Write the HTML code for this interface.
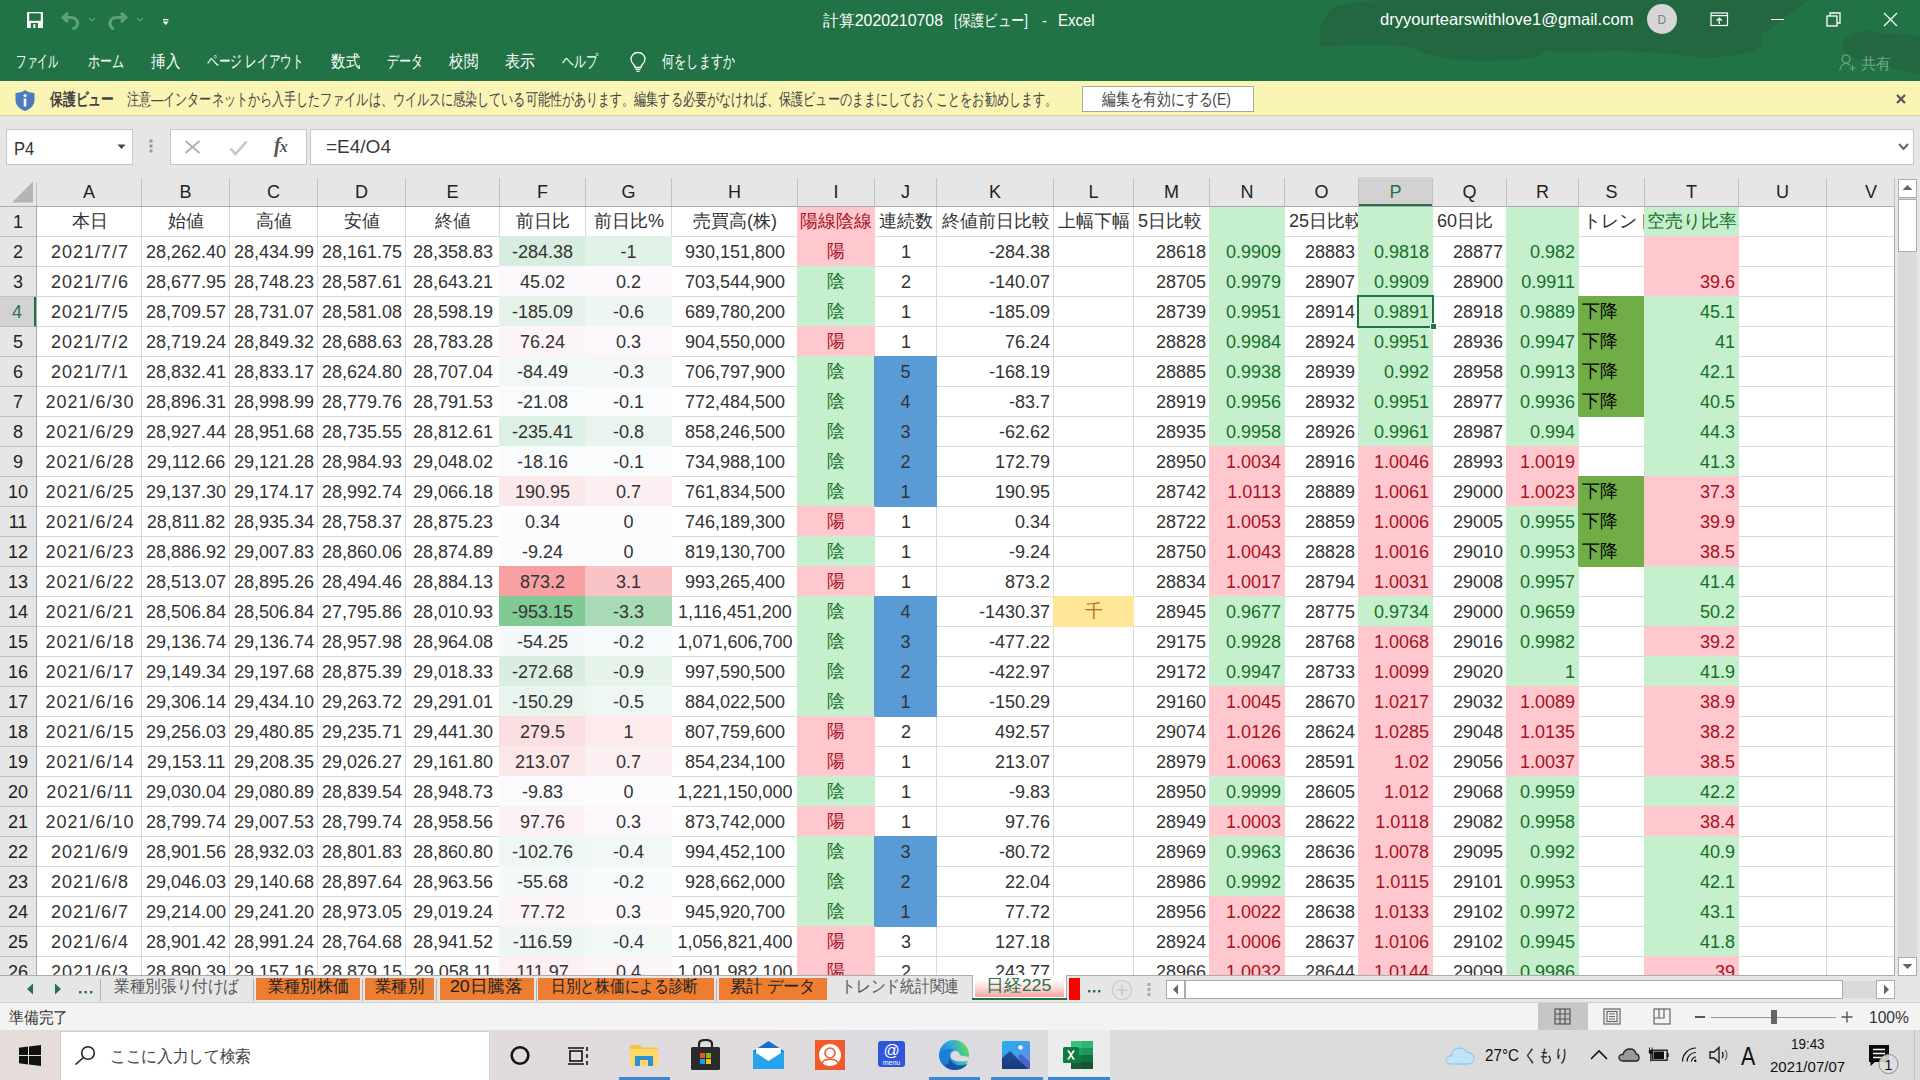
<!DOCTYPE html><html><head><meta charset="utf-8"><title>Excel</title><style>
*{box-sizing:border-box;margin:0;padding:0}
html,body{width:1920px;height:1080px;overflow:hidden;background:#fff}
body{position:relative;font-family:"Liberation Sans",sans-serif;color:#333}
.abs{position:absolute}
#title{position:absolute;left:0;top:0;width:1920px;height:81px;background:#217346;overflow:hidden;color:#fff}
#msg{position:absolute;left:0;top:81px;width:1920px;height:35px;background:#fbf5b5;border-bottom:1px solid #dfd68c}
#fbar{position:absolute;left:0;top:116px;width:1920px;height:61px;background:#e6e6e6}
#colhdr{position:absolute;left:0;top:177px;width:1896px;height:30px;background:#e6e6e6;border-bottom:1px solid #ababab}
.ch{position:absolute;top:0;height:29px;font-size:18px;line-height:31px;text-align:center;color:#222}
.ch.sel{background:#d2d2d2;color:#217346;border-bottom:2px solid #217346;line-height:31px}
.chl{position:absolute;top:1px;width:1px;height:28px;background:#c0c0c0}
#rowhdr{position:absolute;left:0;top:207px;width:37px;height:768px;background:#e6e6e6;border-right:1px solid #ababab;overflow:hidden}
.rh{position:absolute;left:0;width:36px;height:30px;border-bottom:1px solid #c0c0c0;font-size:18px;line-height:31px;text-align:center;color:#222}
.rh.sel{background:#d2d2d2;color:#217346;border-right:2px solid #217346}
#grid{position:absolute;left:0;top:0;width:1920px;height:1080px}
.vl{position:absolute;top:207px;width:1px;height:768px;background:#d9d9d9}
.hl{position:absolute;left:37px;width:1857px;height:1px;background:#d9d9d9}
.c{position:absolute;height:30px;font-size:18px;line-height:31px;white-space:nowrap;overflow:visible}
.c.r{text-align:right;padding-right:4px}
.c.m{text-align:center}
.c.l{text-align:left;padding-left:4px}
#sel{position:absolute;left:1357px;top:295px;width:77px;height:33px;border:2px solid #217346}
#selh{position:absolute;left:1430px;top:323px;width:7px;height:7px;background:#217346;border:1px solid #fff}
#gridwrap{position:absolute;left:37px;top:207px;width:1858px;height:768px;overflow:hidden}

.t{position:absolute;white-space:nowrap;line-height:1;transform-origin:0 50%}
#tabs{position:absolute;left:0;top:975px;width:1920px;height:28px;background:#e6e6e6;border-bottom:1px solid #d0d0d0}
#status{position:absolute;left:0;top:1003px;width:1920px;height:27px;background:#f3f3f3}
#taskbar{position:absolute;left:0;top:1030px;width:1920px;height:50px;background:linear-gradient(90deg,#e6dcd9 0%,#e2dbdc 25%,#dedbe0 45%,#dcdcdd 62%,#dbdbdb 100%)}
</style></head><body>
<div id="title">
<svg class="abs" style="left:0;top:0" width="1920" height="81">
<g fill="#22673f">
<path d="M1320 47 C1318 30 1322 8 1345 4 C1360 1 1380 0 1400 0 L1808 0 L1760 36 C1766 44 1762 50 1740 54 C1720 58 1700 58 1680 55 C1640 50 1600 50 1568 53 L1545 50 C1540 58 1530 60 1480 61 C1450 61 1430 56 1418 50 C1410 47 1400 45 1380 45 C1360 45 1340 45 1320 47 Z"/>
<ellipse cx="1870" cy="46" rx="28" ry="15"/>
<path d="M1850 52 C1860 36 1880 30 1920 36 L1920 74 C1900 70 1870 64 1850 52 Z"/>
</g></svg>
<svg class="abs" style="left:27px;top:12px" width="16" height="16" viewBox="0 0 16 16">
<rect x="0" y="0" width="16" height="16" rx="1" fill="#fff"/>
<rect x="2.2" y="1.3" width="11.6" height="7.5" fill="#217346"/>
<rect x="3.8" y="10.9" width="7.1" height="5.1" fill="#217346"/><rect x="6.3" y="12.2" width="2.1" height="3.8" fill="#fff"/>
</svg>
<svg class="abs" style="left:60px;top:11px" width="90" height="20" viewBox="0 0 90 20">
<g fill="none" stroke="#5d9f78" stroke-width="3.2">
<path d="M4 6.5 H11 C15.5 6.5 17.5 9.5 17.5 12.5 C17.5 15.5 15.5 17.5 12.5 17.5"/><path d="M8 2 L3.2 6.5 L8 11"/>
<path d="M63 6.5 H57 C52 6.5 50 9.5 50 12.5 C50 15.5 52 17.5 54 17.5"/><path d="M61 2 L65.8 6.5 L61 11"/>
</g>
<g fill="none" stroke="#5d9f78" stroke-width="1.1"><path d="M29 7 L32 10 L35 7"/><path d="M77 7 L80 10 L83 7"/></g>
</svg>
<svg class="abs" style="left:162px;top:18px" width="8" height="8" viewBox="0 0 8 8">
<rect x="1" y="1" width="5.4" height="1.3" fill="#fff"/><path d="M0.6 3.6 H6.8 L3.7 7 Z" fill="#fff"/></svg>
<div class="t" data-w="120" style="transform:scaleX(0.9917);left:823.0px;top:12.5px;font-size:16px;color:#fff;font-weight:normal;">計算2020210708</div>
<div class="t" data-w="74" style="transform:scaleX(0.8315);left:954.0px;top:12.5px;font-size:16px;color:#fff;font-weight:normal;">[保護ビュー]</div>
<div class="t" data-w="4.5" style="transform:scaleX(0.9000);left:1041.5px;top:12.5px;font-size:16px;color:#fff;font-weight:normal;">-</div>
<div class="t" data-w="36.5" style="transform:scaleX(0.9359);left:1057.5px;top:12.5px;font-size:16px;color:#fff;font-weight:normal;">Excel</div>
<div class="t" data-w="253" style="transform:scaleX(1.0040);left:1380.0px;top:11.0px;font-size:16.5px;color:#fff;font-weight:normal;">dryyourtearswithlove1@gmail.com</div>
<div class="abs" style="left:1647px;top:4px;width:30px;height:30px;border-radius:50%;background:#d6d6d6"></div>
<div class="t" style="left:1657.5px;top:14.3px;font-size:12px;color:#808080;font-weight:normal;">D</div>
<svg class="abs" style="left:1710px;top:12px" width="19" height="15" viewBox="0 0 19 15">
<rect x="1" y="1" width="16.5" height="12.5" fill="none" stroke="#fff" stroke-width="1.2"/>
<path d="M1 3.6 H17.5" stroke="#fff" stroke-width="1.2"/><path d="M9.25 12 V6.5 M6.6 8.8 L9.25 6.1 L11.9 8.8" fill="none" stroke="#fff" stroke-width="1.3"/></svg>
<div class="abs" style="left:1771px;top:19px;width:13px;height:1px;background:#fff"></div>
<svg class="abs" style="left:1826px;top:12px" width="16" height="15" viewBox="0 0 16 15">
<rect x="1" y="4" width="10" height="10" fill="none" stroke="#fff" stroke-width="1.3"/>
<path d="M4 4 V1 H14 V11 H11" fill="none" stroke="#fff" stroke-width="1.3"/></svg>
<svg class="abs" style="left:1883px;top:12px" width="15" height="15" viewBox="0 0 15 15">
<path d="M1 1 L14 14 M14 1 L1 14" stroke="#fff" stroke-width="1.2"/></svg>
<div class="t" data-w="42" style="transform:scaleX(0.6176);left:16.0px;top:52.6px;font-size:17px;color:#fff;font-weight:normal;">ファイル</div>
<div class="t" data-w="36" style="transform:scaleX(0.7059);left:88.0px;top:52.6px;font-size:17px;color:#fff;font-weight:normal;">ホーム</div>
<div class="t" data-w="29" style="transform:scaleX(0.8529);left:151.0px;top:52.6px;font-size:17px;color:#fff;font-weight:normal;">挿入</div>
<div class="t" data-w="97" style="transform:scaleX(0.6879);left:207.0px;top:52.6px;font-size:17px;color:#fff;font-weight:normal;">ページ レイアウト</div>
<div class="t" data-w="29" style="transform:scaleX(0.8529);left:331.0px;top:52.6px;font-size:17px;color:#fff;font-weight:normal;">数式</div>
<div class="t" data-w="36" style="transform:scaleX(0.7059);left:387.0px;top:52.6px;font-size:17px;color:#fff;font-weight:normal;">データ</div>
<div class="t" data-w="29" style="transform:scaleX(0.8529);left:449.0px;top:52.6px;font-size:17px;color:#fff;font-weight:normal;">校閲</div>
<div class="t" data-w="30" style="transform:scaleX(0.8824);left:505.0px;top:52.6px;font-size:17px;color:#fff;font-weight:normal;">表示</div>
<div class="t" data-w="36" style="transform:scaleX(0.7059);left:562.0px;top:52.6px;font-size:17px;color:#fff;font-weight:normal;">ヘルプ</div>
<svg class="abs" style="left:629px;top:51px" width="18" height="22" viewBox="0 0 18 22">
<path d="M9 1.5 C4.5 1.5 2 4.8 2 8.3 C2 11 3.6 12.6 5 14 C5.8 14.8 6 15.5 6 16.5 H12 C12 15.5 12.2 14.8 13 14 C14.4 12.6 16 11 16 8.3 C16 4.8 13.5 1.5 9 1.5 Z" fill="none" stroke="#fff" stroke-width="1.3"/>
<path d="M6.5 18.3 H11.5 M7.5 20.3 H10.5" stroke="#fff" stroke-width="1.3"/></svg>
<div class="t" data-w="73" style="transform:scaleX(0.7157);left:662.0px;top:52.6px;font-size:17px;color:#fff;font-weight:normal;">何をしますか</div>
<svg class="abs" style="left:1839px;top:54px" width="18" height="18" viewBox="0 0 18 18">
<g fill="none" stroke="#72a483" stroke-width="1.2"><circle cx="7" cy="5" r="4"/><path d="M0.8 16.5 C1.5 11.5 4 9.5 7 9.5 C8.5 9.5 9.8 10 10.8 11"/>
<path d="M13.5 11 V17 M10.5 14 H16.5"/></g></svg>
<div class="t" data-w="30" style="transform:scaleX(0.9375);left:1861.0px;top:55.5px;font-size:16px;color:#72a483;font-weight:normal;">共有</div>
</div>
<div id="msg">
<svg class="abs" style="left:14px;top:8px" width="22" height="23" viewBox="0 0 22 23">
<path d="M11 1 C8 3.2 5 4 1.5 4 V11 C1.5 16.5 5.5 20 11 22 C16.5 20 20.5 16.5 20.5 11 V4 C17 4 14 3.2 11 1 Z" fill="#4a7cc0"/>
<rect x="9.7" y="9.5" width="2.6" height="8" fill="#fff"/><circle cx="11" cy="6.6" r="1.5" fill="#fff"/></svg>
<div class="t" data-w="64" style="transform:scaleX(0.7529);left:50.0px;top:9.6px;font-size:17px;color:#444;font-weight:bold;">保護ビュー</div>
<div class="t" data-w="930" style="transform:scaleX(0.7105);left:127.0px;top:9.6px;font-size:17px;color:#444;font-weight:normal;">注意―インターネットから入手したファイルは、ウイルスに感染している可能性があります。編集する必要がなければ、保護ビューのままにしておくことをお勧めします。</div>
<div class="abs" style="left:1082px;top:5px;width:172px;height:26px;background:#fff;border:1px solid #a6a6a6"></div>
<div class="t" data-w="129" style="transform:scaleX(0.8113);left:1102.0px;top:10.1px;font-size:17px;color:#444;font-weight:normal;">編集を有効にする(E)</div>
<svg class="abs" style="left:1896px;top:13px" width="10" height="10" viewBox="0 0 10 10">
<path d="M1 1 L9 9 M9 1 L1 9" stroke="#555" stroke-width="2.2"/></svg>
</div>
<div id="fbar">
<div class="abs" style="left:6px;top:13px;width:127px;height:36px;background:#fff;border:1px solid #c6c6c6"></div>
<div class="t" data-w="20" style="transform:scaleX(0.8696);left:14.0px;top:23.4px;font-size:19px;color:#333;font-weight:normal;">P4</div>
<svg class="abs" style="left:117px;top:28px" width="9" height="6"><path d="M0.5 0.5 H8.5 L4.5 5 Z" fill="#444"/></svg>
<svg class="abs" style="left:149px;top:23px" width="5" height="15"><rect x="0.5" y="0.5" width="3" height="3" fill="#999"/><rect x="0.5" y="5.5" width="3" height="3" fill="#999"/><rect x="0.5" y="10.5" width="3" height="3" fill="#999"/></svg>
<div class="abs" style="left:170px;top:13px;width:137px;height:36px;background:#fff;border:1px solid #c6c6c6"></div>
<svg class="abs" style="left:184px;top:24px" width="17" height="14"><path d="M1.5 1 L15.5 13 M15.5 1 L1.5 13" stroke="#b4b4b4" stroke-width="2.2"/></svg>
<svg class="abs" style="left:229px;top:24px" width="19" height="16"><path d="M1.5 8.5 L6.5 14 L17.5 1.5" fill="none" stroke="#c8c8c8" stroke-width="2.6"/></svg>
<div class="t" style="left:274px;top:19px;font-family:'Liberation Serif',serif;font-style:italic;font-weight:bold;font-size:20px;color:#555;letter-spacing:-1px">f<span style="font-size:16px">x</span></div>
<div class="abs" style="left:310px;top:13px;width:1604px;height:36px;background:#fff;border:1px solid #c6c6c6"></div>
<div class="t" data-w="65" style="transform:scaleX(1.0000);left:326.0px;top:21.4px;font-size:19px;color:#3a3a3a;font-weight:normal;transform-origin:0 100%;">=E4/O4</div>
<svg class="abs" style="left:1898px;top:27px" width="11" height="8"><path d="M1 1 L5.5 6 L10 1" fill="none" stroke="#666" stroke-width="2"/></svg>
</div>
<div style="position:absolute;left:0;top:0;width:1895px;height:975px;overflow:hidden">
<div id="grid">
<div class="vl" style="left:141px"></div>
<div class="vl" style="left:229px"></div>
<div class="vl" style="left:317px"></div>
<div class="vl" style="left:405px"></div>
<div class="vl" style="left:499px"></div>
<div class="vl" style="left:585px"></div>
<div class="vl" style="left:671px"></div>
<div class="vl" style="left:797px"></div>
<div class="vl" style="left:874px"></div>
<div class="vl" style="left:936px"></div>
<div class="vl" style="left:1053px"></div>
<div class="vl" style="left:1133px"></div>
<div class="vl" style="left:1209px"></div>
<div class="vl" style="left:1284px"></div>
<div class="vl" style="left:1358px"></div>
<div class="vl" style="left:1432px"></div>
<div class="vl" style="left:1506px"></div>
<div class="vl" style="left:1578px"></div>
<div class="vl" style="left:1644px"></div>
<div class="vl" style="left:1738px"></div>
<div class="vl" style="left:1826px"></div>
<div class="hl" style="top:236px"></div>
<div class="hl" style="top:266px"></div>
<div class="hl" style="top:296px"></div>
<div class="hl" style="top:326px"></div>
<div class="hl" style="top:356px"></div>
<div class="hl" style="top:386px"></div>
<div class="hl" style="top:416px"></div>
<div class="hl" style="top:446px"></div>
<div class="hl" style="top:476px"></div>
<div class="hl" style="top:506px"></div>
<div class="hl" style="top:536px"></div>
<div class="hl" style="top:566px"></div>
<div class="hl" style="top:596px"></div>
<div class="hl" style="top:626px"></div>
<div class="hl" style="top:656px"></div>
<div class="hl" style="top:686px"></div>
<div class="hl" style="top:716px"></div>
<div class="hl" style="top:746px"></div>
<div class="hl" style="top:776px"></div>
<div class="hl" style="top:806px"></div>
<div class="hl" style="top:836px"></div>
<div class="hl" style="top:866px"></div>
<div class="hl" style="top:896px"></div>
<div class="hl" style="top:926px"></div>
<div class="hl" style="top:956px"></div>
<div class="c m" style="left:37px;top:207px;width:105px;height:30px;line-height:29px;">本日</div>
<div class="c m" style="left:142px;top:207px;width:88px;height:30px;line-height:29px;">始値</div>
<div class="c m" style="left:230px;top:207px;width:88px;height:30px;line-height:29px;">高値</div>
<div class="c m" style="left:318px;top:207px;width:88px;height:30px;line-height:29px;">安値</div>
<div class="c m" style="left:406px;top:207px;width:94px;height:30px;line-height:29px;">終値</div>
<div class="c m" style="left:500px;top:207px;width:86px;height:30px;line-height:29px;">前日比</div>
<div class="c m" style="left:586px;top:207px;width:86px;height:30px;line-height:29px;">前日比%</div>
<div class="c m" style="left:672px;top:207px;width:126px;height:30px;line-height:29px;">売買高(株)</div>
<div class="c m" style="left:797px;top:207px;width:78px;height:30px;line-height:29px;background:#ffc7ce;color:#a8101c;">陽線陰線</div>
<div class="c m" style="left:875px;top:207px;width:62px;height:30px;line-height:29px;">連続数</div>
<div class="c m" style="left:937px;top:207px;width:117px;height:30px;line-height:29px;">終値前日比較</div>
<div class="c m" style="left:1054px;top:207px;width:80px;height:30px;line-height:29px;">上幅下幅</div>
<div class="c l" style="left:1134px;top:207px;width:76px;height:30px;line-height:29px;">5日比較</div>
<div class="c l" style="left:1209px;top:207px;width:76px;height:30px;line-height:31px;background:#c6efce;"></div>
<div class="c l" style="left:1285px;top:207px;width:74px;height:30px;line-height:29px;">25日比較</div>
<div class="c l" style="left:1358px;top:207px;width:75px;height:30px;line-height:31px;background:#c6efce;"></div>
<div class="c l" style="left:1433px;top:207px;width:74px;height:30px;line-height:29px;">60日比</div>
<div class="c l" style="left:1506px;top:207px;width:73px;height:30px;line-height:31px;background:#c6efce;"></div>
<div class="c l" style="left:1579px;top:207px;width:66px;height:30px;line-height:29px;overflow:hidden;">トレンド</div>
<div class="c l" style="left:1644px;top:207px;width:95px;height:30px;line-height:29px;background:#c6efce;color:#137024;padding-left:3px;">空売り比率</div>
<div class="c m" style="left:37px;top:237px;width:105px;height:30px;line-height:31px;letter-spacing:1px;text-indent:1px;">2021/7/7</div>
<div class="c m" style="left:142px;top:237px;width:88px;height:30px;line-height:31px;">28,262.40</div>
<div class="c m" style="left:230px;top:237px;width:88px;height:30px;line-height:31px;">28,434.99</div>
<div class="c m" style="left:318px;top:237px;width:88px;height:30px;line-height:31px;">28,161.75</div>
<div class="c m" style="left:406px;top:237px;width:94px;height:30px;line-height:31px;">28,358.83</div>
<div class="c m" style="left:499px;top:236px;width:87px;height:31px;line-height:32px;background:#d7eddf;">-284.38</div>
<div class="c m" style="left:585px;top:236px;width:87px;height:31px;line-height:32px;background:#e2f2e9;">-1</div>
<div class="c m" style="left:672px;top:237px;width:126px;height:30px;line-height:31px;">930,151,800</div>
<div class="c m" style="left:797px;top:236px;width:78px;height:31px;line-height:30px;background:#ffc7ce;color:#a8101c;">陽</div>
<div class="c m" style="left:875px;top:237px;width:62px;height:30px;line-height:31px;">1</div>
<div class="c r" style="left:937px;top:237px;width:117px;height:30px;line-height:31px;">-284.38</div>
<div class="c r" style="left:1134px;top:237px;width:76px;height:30px;line-height:31px;">28618</div>
<div class="c r" style="left:1209px;top:236px;width:76px;height:31px;line-height:32px;background:#c6efce;color:#137024;">0.9909</div>
<div class="c r" style="left:1358px;top:236px;width:75px;height:31px;line-height:32px;background:#c6efce;color:#137024;">0.9818</div>
<div class="c r" style="left:1506px;top:236px;width:73px;height:31px;line-height:32px;background:#c6efce;color:#137024;">0.982</div>
<div class="c r" style="left:1285px;top:237px;width:74px;height:30px;line-height:31px;">28883</div>
<div class="c r" style="left:1433px;top:237px;width:74px;height:30px;line-height:31px;">28877</div>
<div class="c r" style="left:1644px;top:236px;width:95px;height:31px;line-height:32px;background:#ffc7ce;color:#a8101c;"></div>
<div class="c m" style="left:37px;top:267px;width:105px;height:30px;line-height:31px;letter-spacing:1px;text-indent:1px;">2021/7/6</div>
<div class="c m" style="left:142px;top:267px;width:88px;height:30px;line-height:31px;">28,677.95</div>
<div class="c m" style="left:230px;top:267px;width:88px;height:30px;line-height:31px;">28,748.23</div>
<div class="c m" style="left:318px;top:267px;width:88px;height:30px;line-height:31px;">28,587.61</div>
<div class="c m" style="left:406px;top:267px;width:94px;height:30px;line-height:31px;">28,643.21</div>
<div class="c m" style="left:499px;top:266px;width:87px;height:31px;line-height:32px;background:#fcf7fa;">45.02</div>
<div class="c m" style="left:585px;top:266px;width:87px;height:31px;line-height:32px;background:#fcf8fb;">0.2</div>
<div class="c m" style="left:672px;top:267px;width:126px;height:30px;line-height:31px;">703,544,900</div>
<div class="c m" style="left:797px;top:266px;width:78px;height:31px;line-height:30px;background:#c6efce;color:#137024;">陰</div>
<div class="c m" style="left:875px;top:267px;width:62px;height:30px;line-height:31px;">2</div>
<div class="c r" style="left:937px;top:267px;width:117px;height:30px;line-height:31px;">-140.07</div>
<div class="c r" style="left:1134px;top:267px;width:76px;height:30px;line-height:31px;">28705</div>
<div class="c r" style="left:1209px;top:266px;width:76px;height:31px;line-height:32px;background:#c6efce;color:#137024;">0.9979</div>
<div class="c r" style="left:1358px;top:266px;width:75px;height:31px;line-height:32px;background:#c6efce;color:#137024;">0.9909</div>
<div class="c r" style="left:1506px;top:266px;width:73px;height:31px;line-height:32px;background:#c6efce;color:#137024;">0.9911</div>
<div class="c r" style="left:1285px;top:267px;width:74px;height:30px;line-height:31px;">28907</div>
<div class="c r" style="left:1433px;top:267px;width:74px;height:30px;line-height:31px;">28900</div>
<div class="c r" style="left:1644px;top:266px;width:95px;height:31px;line-height:32px;background:#ffc7ce;color:#a8101c;">39.6</div>
<div class="c m" style="left:37px;top:297px;width:105px;height:30px;line-height:31px;letter-spacing:1px;text-indent:1px;">2021/7/5</div>
<div class="c m" style="left:142px;top:297px;width:88px;height:30px;line-height:31px;">28,709.57</div>
<div class="c m" style="left:230px;top:297px;width:88px;height:30px;line-height:31px;">28,731.07</div>
<div class="c m" style="left:318px;top:297px;width:88px;height:30px;line-height:31px;">28,581.08</div>
<div class="c m" style="left:406px;top:297px;width:94px;height:30px;line-height:31px;">28,598.19</div>
<div class="c m" style="left:499px;top:296px;width:87px;height:31px;line-height:32px;background:#e4f2ea;">-185.09</div>
<div class="c m" style="left:585px;top:296px;width:87px;height:31px;line-height:32px;background:#edf6f2;">-0.6</div>
<div class="c m" style="left:672px;top:297px;width:126px;height:30px;line-height:31px;">689,780,200</div>
<div class="c m" style="left:797px;top:296px;width:78px;height:31px;line-height:30px;background:#c6efce;color:#137024;">陰</div>
<div class="c m" style="left:875px;top:297px;width:62px;height:30px;line-height:31px;">1</div>
<div class="c r" style="left:937px;top:297px;width:117px;height:30px;line-height:31px;">-185.09</div>
<div class="c r" style="left:1134px;top:297px;width:76px;height:30px;line-height:31px;">28739</div>
<div class="c r" style="left:1209px;top:296px;width:76px;height:31px;line-height:32px;background:#c6efce;color:#137024;">0.9951</div>
<div class="c r" style="left:1358px;top:296px;width:75px;height:31px;line-height:32px;background:#c6efce;color:#137024;">0.9891</div>
<div class="c r" style="left:1506px;top:296px;width:73px;height:31px;line-height:32px;background:#c6efce;color:#137024;">0.9889</div>
<div class="c r" style="left:1285px;top:297px;width:74px;height:30px;line-height:31px;">28914</div>
<div class="c r" style="left:1433px;top:297px;width:74px;height:30px;line-height:31px;">28918</div>
<div class="c l" style="left:1578px;top:296px;width:67px;height:31px;line-height:30px;background:#70ad47;color:#000;">下降</div>
<div class="c r" style="left:1644px;top:296px;width:95px;height:31px;line-height:32px;background:#c6efce;color:#137024;">45.1</div>
<div class="c m" style="left:37px;top:327px;width:105px;height:30px;line-height:31px;letter-spacing:1px;text-indent:1px;">2021/7/2</div>
<div class="c m" style="left:142px;top:327px;width:88px;height:30px;line-height:31px;">28,719.24</div>
<div class="c m" style="left:230px;top:327px;width:88px;height:30px;line-height:31px;">28,849.32</div>
<div class="c m" style="left:318px;top:327px;width:88px;height:30px;line-height:31px;">28,688.63</div>
<div class="c m" style="left:406px;top:327px;width:94px;height:30px;line-height:31px;">28,783.28</div>
<div class="c m" style="left:499px;top:326px;width:87px;height:31px;line-height:32px;background:#fcf4f7;">76.24</div>
<div class="c m" style="left:585px;top:326px;width:87px;height:31px;line-height:32px;background:#fcf7fa;">0.3</div>
<div class="c m" style="left:672px;top:327px;width:126px;height:30px;line-height:31px;">904,550,000</div>
<div class="c m" style="left:797px;top:326px;width:78px;height:31px;line-height:30px;background:#ffc7ce;color:#a8101c;">陽</div>
<div class="c m" style="left:875px;top:327px;width:62px;height:30px;line-height:31px;">1</div>
<div class="c r" style="left:937px;top:327px;width:117px;height:30px;line-height:31px;">76.24</div>
<div class="c r" style="left:1134px;top:327px;width:76px;height:30px;line-height:31px;">28828</div>
<div class="c r" style="left:1209px;top:326px;width:76px;height:31px;line-height:32px;background:#c6efce;color:#137024;">0.9984</div>
<div class="c r" style="left:1358px;top:326px;width:75px;height:31px;line-height:32px;background:#c6efce;color:#137024;">0.9951</div>
<div class="c r" style="left:1506px;top:326px;width:73px;height:31px;line-height:32px;background:#c6efce;color:#137024;">0.9947</div>
<div class="c r" style="left:1285px;top:327px;width:74px;height:30px;line-height:31px;">28924</div>
<div class="c r" style="left:1433px;top:327px;width:74px;height:30px;line-height:31px;">28936</div>
<div class="c l" style="left:1578px;top:326px;width:67px;height:31px;line-height:30px;background:#70ad47;color:#000;">下降</div>
<div class="c r" style="left:1644px;top:326px;width:95px;height:31px;line-height:32px;background:#c6efce;color:#137024;">41</div>
<div class="c m" style="left:37px;top:357px;width:105px;height:30px;line-height:31px;letter-spacing:1px;text-indent:1px;">2021/7/1</div>
<div class="c m" style="left:142px;top:357px;width:88px;height:30px;line-height:31px;">28,832.41</div>
<div class="c m" style="left:230px;top:357px;width:88px;height:30px;line-height:31px;">28,833.17</div>
<div class="c m" style="left:318px;top:357px;width:88px;height:30px;line-height:31px;">28,624.80</div>
<div class="c m" style="left:406px;top:357px;width:94px;height:30px;line-height:31px;">28,707.04</div>
<div class="c m" style="left:499px;top:356px;width:87px;height:31px;line-height:32px;background:#f1f8f6;">-84.49</div>
<div class="c m" style="left:585px;top:356px;width:87px;height:31px;line-height:32px;background:#f4f9f8;">-0.3</div>
<div class="c m" style="left:672px;top:357px;width:126px;height:30px;line-height:31px;">706,797,900</div>
<div class="c m" style="left:797px;top:356px;width:78px;height:31px;line-height:30px;background:#c6efce;color:#137024;">陰</div>
<div class="c m" style="left:874px;top:356px;width:63px;height:31px;line-height:32px;background:#5b9bd5;">5</div>
<div class="c r" style="left:937px;top:357px;width:117px;height:30px;line-height:31px;">-168.19</div>
<div class="c r" style="left:1134px;top:357px;width:76px;height:30px;line-height:31px;">28885</div>
<div class="c r" style="left:1209px;top:356px;width:76px;height:31px;line-height:32px;background:#c6efce;color:#137024;">0.9938</div>
<div class="c r" style="left:1358px;top:356px;width:75px;height:31px;line-height:32px;background:#c6efce;color:#137024;">0.992</div>
<div class="c r" style="left:1506px;top:356px;width:73px;height:31px;line-height:32px;background:#c6efce;color:#137024;">0.9913</div>
<div class="c r" style="left:1285px;top:357px;width:74px;height:30px;line-height:31px;">28939</div>
<div class="c r" style="left:1433px;top:357px;width:74px;height:30px;line-height:31px;">28958</div>
<div class="c l" style="left:1578px;top:356px;width:67px;height:31px;line-height:30px;background:#70ad47;color:#000;">下降</div>
<div class="c r" style="left:1644px;top:356px;width:95px;height:31px;line-height:32px;background:#c6efce;color:#137024;">42.1</div>
<div class="c m" style="left:37px;top:387px;width:105px;height:30px;line-height:31px;letter-spacing:1px;text-indent:1px;">2021/6/30</div>
<div class="c m" style="left:142px;top:387px;width:88px;height:30px;line-height:31px;">28,896.31</div>
<div class="c m" style="left:230px;top:387px;width:88px;height:30px;line-height:31px;">28,998.99</div>
<div class="c m" style="left:318px;top:387px;width:88px;height:30px;line-height:31px;">28,779.76</div>
<div class="c m" style="left:406px;top:387px;width:94px;height:30px;line-height:31px;">28,791.53</div>
<div class="c m" style="left:499px;top:386px;width:87px;height:31px;line-height:32px;background:#f9fbfd;">-21.08</div>
<div class="c m" style="left:585px;top:386px;width:87px;height:31px;line-height:32px;background:#f9fbfd;">-0.1</div>
<div class="c m" style="left:672px;top:387px;width:126px;height:30px;line-height:31px;">772,484,500</div>
<div class="c m" style="left:797px;top:386px;width:78px;height:31px;line-height:30px;background:#c6efce;color:#137024;">陰</div>
<div class="c m" style="left:874px;top:386px;width:63px;height:31px;line-height:32px;background:#5b9bd5;">4</div>
<div class="c r" style="left:937px;top:387px;width:117px;height:30px;line-height:31px;">-83.7</div>
<div class="c r" style="left:1134px;top:387px;width:76px;height:30px;line-height:31px;">28919</div>
<div class="c r" style="left:1209px;top:386px;width:76px;height:31px;line-height:32px;background:#c6efce;color:#137024;">0.9956</div>
<div class="c r" style="left:1358px;top:386px;width:75px;height:31px;line-height:32px;background:#c6efce;color:#137024;">0.9951</div>
<div class="c r" style="left:1506px;top:386px;width:73px;height:31px;line-height:32px;background:#c6efce;color:#137024;">0.9936</div>
<div class="c r" style="left:1285px;top:387px;width:74px;height:30px;line-height:31px;">28932</div>
<div class="c r" style="left:1433px;top:387px;width:74px;height:30px;line-height:31px;">28977</div>
<div class="c l" style="left:1578px;top:386px;width:67px;height:31px;line-height:30px;background:#70ad47;color:#000;">下降</div>
<div class="c r" style="left:1644px;top:386px;width:95px;height:31px;line-height:32px;background:#c6efce;color:#137024;">40.5</div>
<div class="c m" style="left:37px;top:417px;width:105px;height:30px;line-height:31px;letter-spacing:1px;text-indent:1px;">2021/6/29</div>
<div class="c m" style="left:142px;top:417px;width:88px;height:30px;line-height:31px;">28,927.44</div>
<div class="c m" style="left:230px;top:417px;width:88px;height:30px;line-height:31px;">28,951.68</div>
<div class="c m" style="left:318px;top:417px;width:88px;height:30px;line-height:31px;">28,735.55</div>
<div class="c m" style="left:406px;top:417px;width:94px;height:30px;line-height:31px;">28,812.61</div>
<div class="c m" style="left:499px;top:416px;width:87px;height:31px;line-height:32px;background:#ddf0e5;">-235.41</div>
<div class="c m" style="left:585px;top:416px;width:87px;height:31px;line-height:32px;background:#e8f4ed;">-0.8</div>
<div class="c m" style="left:672px;top:417px;width:126px;height:30px;line-height:31px;">858,246,500</div>
<div class="c m" style="left:797px;top:416px;width:78px;height:31px;line-height:30px;background:#c6efce;color:#137024;">陰</div>
<div class="c m" style="left:874px;top:416px;width:63px;height:31px;line-height:32px;background:#5b9bd5;">3</div>
<div class="c r" style="left:937px;top:417px;width:117px;height:30px;line-height:31px;">-62.62</div>
<div class="c r" style="left:1134px;top:417px;width:76px;height:30px;line-height:31px;">28935</div>
<div class="c r" style="left:1209px;top:416px;width:76px;height:31px;line-height:32px;background:#c6efce;color:#137024;">0.9958</div>
<div class="c r" style="left:1358px;top:416px;width:75px;height:31px;line-height:32px;background:#c6efce;color:#137024;">0.9961</div>
<div class="c r" style="left:1506px;top:416px;width:73px;height:31px;line-height:32px;background:#c6efce;color:#137024;">0.994</div>
<div class="c r" style="left:1285px;top:417px;width:74px;height:30px;line-height:31px;">28926</div>
<div class="c r" style="left:1433px;top:417px;width:74px;height:30px;line-height:31px;">28987</div>
<div class="c r" style="left:1644px;top:416px;width:95px;height:31px;line-height:32px;background:#c6efce;color:#137024;">44.3</div>
<div class="c m" style="left:37px;top:447px;width:105px;height:30px;line-height:31px;letter-spacing:1px;text-indent:1px;">2021/6/28</div>
<div class="c m" style="left:142px;top:447px;width:88px;height:30px;line-height:31px;">29,112.66</div>
<div class="c m" style="left:230px;top:447px;width:88px;height:30px;line-height:31px;">29,121.28</div>
<div class="c m" style="left:318px;top:447px;width:88px;height:30px;line-height:31px;">28,984.93</div>
<div class="c m" style="left:406px;top:447px;width:94px;height:30px;line-height:31px;">29,048.02</div>
<div class="c m" style="left:499px;top:446px;width:87px;height:31px;line-height:32px;background:#fafbfd;">-18.16</div>
<div class="c m" style="left:585px;top:446px;width:87px;height:31px;line-height:32px;background:#f9fbfd;">-0.1</div>
<div class="c m" style="left:672px;top:447px;width:126px;height:30px;line-height:31px;">734,988,100</div>
<div class="c m" style="left:797px;top:446px;width:78px;height:31px;line-height:30px;background:#c6efce;color:#137024;">陰</div>
<div class="c m" style="left:874px;top:446px;width:63px;height:31px;line-height:32px;background:#5b9bd5;">2</div>
<div class="c r" style="left:937px;top:447px;width:117px;height:30px;line-height:31px;">172.79</div>
<div class="c r" style="left:1134px;top:447px;width:76px;height:30px;line-height:31px;">28950</div>
<div class="c r" style="left:1209px;top:446px;width:76px;height:31px;line-height:32px;background:#ffc7ce;color:#a8101c;">1.0034</div>
<div class="c r" style="left:1358px;top:446px;width:75px;height:31px;line-height:32px;background:#ffc7ce;color:#a8101c;">1.0046</div>
<div class="c r" style="left:1506px;top:446px;width:73px;height:31px;line-height:32px;background:#ffc7ce;color:#a8101c;">1.0019</div>
<div class="c r" style="left:1285px;top:447px;width:74px;height:30px;line-height:31px;">28916</div>
<div class="c r" style="left:1433px;top:447px;width:74px;height:30px;line-height:31px;">28993</div>
<div class="c r" style="left:1644px;top:446px;width:95px;height:31px;line-height:32px;background:#c6efce;color:#137024;">41.3</div>
<div class="c m" style="left:37px;top:477px;width:105px;height:30px;line-height:31px;letter-spacing:1px;text-indent:1px;">2021/6/25</div>
<div class="c m" style="left:142px;top:477px;width:88px;height:30px;line-height:31px;">29,137.30</div>
<div class="c m" style="left:230px;top:477px;width:88px;height:30px;line-height:31px;">29,174.17</div>
<div class="c m" style="left:318px;top:477px;width:88px;height:30px;line-height:31px;">28,992.74</div>
<div class="c m" style="left:406px;top:477px;width:94px;height:30px;line-height:31px;">29,066.18</div>
<div class="c m" style="left:499px;top:476px;width:87px;height:31px;line-height:32px;background:#fbe8eb;">190.95</div>
<div class="c m" style="left:585px;top:476px;width:87px;height:31px;line-height:32px;background:#fceff2;">0.7</div>
<div class="c m" style="left:672px;top:477px;width:126px;height:30px;line-height:31px;">761,834,500</div>
<div class="c m" style="left:797px;top:476px;width:78px;height:31px;line-height:30px;background:#c6efce;color:#137024;">陰</div>
<div class="c m" style="left:874px;top:476px;width:63px;height:31px;line-height:32px;background:#5b9bd5;">1</div>
<div class="c r" style="left:937px;top:477px;width:117px;height:30px;line-height:31px;">190.95</div>
<div class="c r" style="left:1134px;top:477px;width:76px;height:30px;line-height:31px;">28742</div>
<div class="c r" style="left:1209px;top:476px;width:76px;height:31px;line-height:32px;background:#ffc7ce;color:#a8101c;">1.0113</div>
<div class="c r" style="left:1358px;top:476px;width:75px;height:31px;line-height:32px;background:#ffc7ce;color:#a8101c;">1.0061</div>
<div class="c r" style="left:1506px;top:476px;width:73px;height:31px;line-height:32px;background:#ffc7ce;color:#a8101c;">1.0023</div>
<div class="c r" style="left:1285px;top:477px;width:74px;height:30px;line-height:31px;">28889</div>
<div class="c r" style="left:1433px;top:477px;width:74px;height:30px;line-height:31px;">29000</div>
<div class="c l" style="left:1578px;top:476px;width:67px;height:31px;line-height:30px;background:#70ad47;color:#000;">下降</div>
<div class="c r" style="left:1644px;top:476px;width:95px;height:31px;line-height:32px;background:#ffc7ce;color:#a8101c;">37.3</div>
<div class="c m" style="left:37px;top:507px;width:105px;height:30px;line-height:31px;letter-spacing:1px;text-indent:1px;">2021/6/24</div>
<div class="c m" style="left:142px;top:507px;width:88px;height:30px;line-height:31px;">28,811.82</div>
<div class="c m" style="left:230px;top:507px;width:88px;height:30px;line-height:31px;">28,935.34</div>
<div class="c m" style="left:318px;top:507px;width:88px;height:30px;line-height:31px;">28,758.37</div>
<div class="c m" style="left:406px;top:507px;width:94px;height:30px;line-height:31px;">28,875.23</div>
<div class="c m" style="left:499px;top:506px;width:87px;height:31px;line-height:32px;background:#fcfcff;">0.34</div>
<div class="c m" style="left:585px;top:506px;width:87px;height:31px;line-height:32px;background:#fcfcff;">0</div>
<div class="c m" style="left:672px;top:507px;width:126px;height:30px;line-height:31px;">746,189,300</div>
<div class="c m" style="left:797px;top:506px;width:78px;height:31px;line-height:30px;background:#ffc7ce;color:#a8101c;">陽</div>
<div class="c m" style="left:875px;top:507px;width:62px;height:30px;line-height:31px;">1</div>
<div class="c r" style="left:937px;top:507px;width:117px;height:30px;line-height:31px;">0.34</div>
<div class="c r" style="left:1134px;top:507px;width:76px;height:30px;line-height:31px;">28722</div>
<div class="c r" style="left:1209px;top:506px;width:76px;height:31px;line-height:32px;background:#ffc7ce;color:#a8101c;">1.0053</div>
<div class="c r" style="left:1358px;top:506px;width:75px;height:31px;line-height:32px;background:#ffc7ce;color:#a8101c;">1.0006</div>
<div class="c r" style="left:1506px;top:506px;width:73px;height:31px;line-height:32px;background:#c6efce;color:#137024;">0.9955</div>
<div class="c r" style="left:1285px;top:507px;width:74px;height:30px;line-height:31px;">28859</div>
<div class="c r" style="left:1433px;top:507px;width:74px;height:30px;line-height:31px;">29005</div>
<div class="c l" style="left:1578px;top:506px;width:67px;height:31px;line-height:30px;background:#70ad47;color:#000;">下降</div>
<div class="c r" style="left:1644px;top:506px;width:95px;height:31px;line-height:32px;background:#ffc7ce;color:#a8101c;">39.9</div>
<div class="c m" style="left:37px;top:537px;width:105px;height:30px;line-height:31px;letter-spacing:1px;text-indent:1px;">2021/6/23</div>
<div class="c m" style="left:142px;top:537px;width:88px;height:30px;line-height:31px;">28,886.92</div>
<div class="c m" style="left:230px;top:537px;width:88px;height:30px;line-height:31px;">29,007.83</div>
<div class="c m" style="left:318px;top:537px;width:88px;height:30px;line-height:31px;">28,860.06</div>
<div class="c m" style="left:406px;top:537px;width:94px;height:30px;line-height:31px;">28,874.89</div>
<div class="c m" style="left:499px;top:536px;width:87px;height:31px;line-height:32px;background:#fbfcfe;">-9.24</div>
<div class="c m" style="left:585px;top:536px;width:87px;height:31px;line-height:32px;background:#fcfcff;">0</div>
<div class="c m" style="left:672px;top:537px;width:126px;height:30px;line-height:31px;">819,130,700</div>
<div class="c m" style="left:797px;top:536px;width:78px;height:31px;line-height:30px;background:#c6efce;color:#137024;">陰</div>
<div class="c m" style="left:875px;top:537px;width:62px;height:30px;line-height:31px;">1</div>
<div class="c r" style="left:937px;top:537px;width:117px;height:30px;line-height:31px;">-9.24</div>
<div class="c r" style="left:1134px;top:537px;width:76px;height:30px;line-height:31px;">28750</div>
<div class="c r" style="left:1209px;top:536px;width:76px;height:31px;line-height:32px;background:#ffc7ce;color:#a8101c;">1.0043</div>
<div class="c r" style="left:1358px;top:536px;width:75px;height:31px;line-height:32px;background:#ffc7ce;color:#a8101c;">1.0016</div>
<div class="c r" style="left:1506px;top:536px;width:73px;height:31px;line-height:32px;background:#c6efce;color:#137024;">0.9953</div>
<div class="c r" style="left:1285px;top:537px;width:74px;height:30px;line-height:31px;">28828</div>
<div class="c r" style="left:1433px;top:537px;width:74px;height:30px;line-height:31px;">29010</div>
<div class="c l" style="left:1578px;top:536px;width:67px;height:31px;line-height:30px;background:#70ad47;color:#000;">下降</div>
<div class="c r" style="left:1644px;top:536px;width:95px;height:31px;line-height:32px;background:#ffc7ce;color:#a8101c;">38.5</div>
<div class="c m" style="left:37px;top:567px;width:105px;height:30px;line-height:31px;letter-spacing:1px;text-indent:1px;">2021/6/22</div>
<div class="c m" style="left:142px;top:567px;width:88px;height:30px;line-height:31px;">28,513.07</div>
<div class="c m" style="left:230px;top:567px;width:88px;height:30px;line-height:31px;">28,895.26</div>
<div class="c m" style="left:318px;top:567px;width:88px;height:30px;line-height:31px;">28,494.46</div>
<div class="c m" style="left:406px;top:567px;width:94px;height:30px;line-height:31px;">28,884.13</div>
<div class="c m" style="left:499px;top:566px;width:87px;height:31px;line-height:32px;background:#f9a0a2;">873.2</div>
<div class="c m" style="left:585px;top:566px;width:87px;height:31px;line-height:32px;background:#fac4c7;">3.1</div>
<div class="c m" style="left:672px;top:567px;width:126px;height:30px;line-height:31px;">993,265,400</div>
<div class="c m" style="left:797px;top:566px;width:78px;height:31px;line-height:30px;background:#ffc7ce;color:#a8101c;">陽</div>
<div class="c m" style="left:875px;top:567px;width:62px;height:30px;line-height:31px;">1</div>
<div class="c r" style="left:937px;top:567px;width:117px;height:30px;line-height:31px;">873.2</div>
<div class="c r" style="left:1134px;top:567px;width:76px;height:30px;line-height:31px;">28834</div>
<div class="c r" style="left:1209px;top:566px;width:76px;height:31px;line-height:32px;background:#ffc7ce;color:#a8101c;">1.0017</div>
<div class="c r" style="left:1358px;top:566px;width:75px;height:31px;line-height:32px;background:#ffc7ce;color:#a8101c;">1.0031</div>
<div class="c r" style="left:1506px;top:566px;width:73px;height:31px;line-height:32px;background:#c6efce;color:#137024;">0.9957</div>
<div class="c r" style="left:1285px;top:567px;width:74px;height:30px;line-height:31px;">28794</div>
<div class="c r" style="left:1433px;top:567px;width:74px;height:30px;line-height:31px;">29008</div>
<div class="c r" style="left:1644px;top:566px;width:95px;height:31px;line-height:32px;background:#c6efce;color:#137024;">41.4</div>
<div class="c m" style="left:37px;top:597px;width:105px;height:30px;line-height:31px;letter-spacing:1px;text-indent:1px;">2021/6/21</div>
<div class="c m" style="left:142px;top:597px;width:88px;height:30px;line-height:31px;">28,506.84</div>
<div class="c m" style="left:230px;top:597px;width:88px;height:30px;line-height:31px;">28,506.84</div>
<div class="c m" style="left:318px;top:597px;width:88px;height:30px;line-height:31px;">27,795.86</div>
<div class="c m" style="left:406px;top:597px;width:94px;height:30px;line-height:31px;">28,010.93</div>
<div class="c m" style="left:499px;top:596px;width:87px;height:31px;line-height:32px;background:#80ca94;">-953.15</div>
<div class="c m" style="left:585px;top:596px;width:87px;height:31px;line-height:32px;background:#a8dab6;">-3.3</div>
<div class="c m" style="left:672px;top:597px;width:126px;height:30px;line-height:31px;">1,116,451,200</div>
<div class="c m" style="left:797px;top:596px;width:78px;height:31px;line-height:30px;background:#c6efce;color:#137024;">陰</div>
<div class="c m" style="left:874px;top:596px;width:63px;height:31px;line-height:32px;background:#5b9bd5;">4</div>
<div class="c r" style="left:937px;top:597px;width:117px;height:30px;line-height:31px;">-1430.37</div>
<div class="c m" style="left:1053px;top:596px;width:81px;height:31px;line-height:30px;background:#ffe699;color:#b86e1c;">千</div>
<div class="c r" style="left:1134px;top:597px;width:76px;height:30px;line-height:31px;">28945</div>
<div class="c r" style="left:1209px;top:596px;width:76px;height:31px;line-height:32px;background:#c6efce;color:#137024;">0.9677</div>
<div class="c r" style="left:1358px;top:596px;width:75px;height:31px;line-height:32px;background:#c6efce;color:#137024;">0.9734</div>
<div class="c r" style="left:1506px;top:596px;width:73px;height:31px;line-height:32px;background:#c6efce;color:#137024;">0.9659</div>
<div class="c r" style="left:1285px;top:597px;width:74px;height:30px;line-height:31px;">28775</div>
<div class="c r" style="left:1433px;top:597px;width:74px;height:30px;line-height:31px;">29000</div>
<div class="c r" style="left:1644px;top:596px;width:95px;height:31px;line-height:32px;background:#c6efce;color:#137024;">50.2</div>
<div class="c m" style="left:37px;top:627px;width:105px;height:30px;line-height:31px;letter-spacing:1px;text-indent:1px;">2021/6/18</div>
<div class="c m" style="left:142px;top:627px;width:88px;height:30px;line-height:31px;">29,136.74</div>
<div class="c m" style="left:230px;top:627px;width:88px;height:30px;line-height:31px;">29,136.74</div>
<div class="c m" style="left:318px;top:627px;width:88px;height:30px;line-height:31px;">28,957.98</div>
<div class="c m" style="left:406px;top:627px;width:94px;height:30px;line-height:31px;">28,964.08</div>
<div class="c m" style="left:499px;top:626px;width:87px;height:31px;line-height:32px;background:#f5f9f9;">-54.25</div>
<div class="c m" style="left:585px;top:626px;width:87px;height:31px;line-height:32px;background:#f7fafb;">-0.2</div>
<div class="c m" style="left:672px;top:627px;width:126px;height:30px;line-height:31px;">1,071,606,700</div>
<div class="c m" style="left:797px;top:626px;width:78px;height:31px;line-height:30px;background:#c6efce;color:#137024;">陰</div>
<div class="c m" style="left:874px;top:626px;width:63px;height:31px;line-height:32px;background:#5b9bd5;">3</div>
<div class="c r" style="left:937px;top:627px;width:117px;height:30px;line-height:31px;">-477.22</div>
<div class="c r" style="left:1134px;top:627px;width:76px;height:30px;line-height:31px;">29175</div>
<div class="c r" style="left:1209px;top:626px;width:76px;height:31px;line-height:32px;background:#c6efce;color:#137024;">0.9928</div>
<div class="c r" style="left:1358px;top:626px;width:75px;height:31px;line-height:32px;background:#ffc7ce;color:#a8101c;">1.0068</div>
<div class="c r" style="left:1506px;top:626px;width:73px;height:31px;line-height:32px;background:#c6efce;color:#137024;">0.9982</div>
<div class="c r" style="left:1285px;top:627px;width:74px;height:30px;line-height:31px;">28768</div>
<div class="c r" style="left:1433px;top:627px;width:74px;height:30px;line-height:31px;">29016</div>
<div class="c r" style="left:1644px;top:626px;width:95px;height:31px;line-height:32px;background:#ffc7ce;color:#a8101c;">39.2</div>
<div class="c m" style="left:37px;top:657px;width:105px;height:30px;line-height:31px;letter-spacing:1px;text-indent:1px;">2021/6/17</div>
<div class="c m" style="left:142px;top:657px;width:88px;height:30px;line-height:31px;">29,149.34</div>
<div class="c m" style="left:230px;top:657px;width:88px;height:30px;line-height:31px;">29,197.68</div>
<div class="c m" style="left:318px;top:657px;width:88px;height:30px;line-height:31px;">28,875.39</div>
<div class="c m" style="left:406px;top:657px;width:94px;height:30px;line-height:31px;">29,018.33</div>
<div class="c m" style="left:499px;top:656px;width:87px;height:31px;line-height:32px;background:#d9eee0;">-272.68</div>
<div class="c m" style="left:585px;top:656px;width:87px;height:31px;line-height:32px;background:#e5f3eb;">-0.9</div>
<div class="c m" style="left:672px;top:657px;width:126px;height:30px;line-height:31px;">997,590,500</div>
<div class="c m" style="left:797px;top:656px;width:78px;height:31px;line-height:30px;background:#c6efce;color:#137024;">陰</div>
<div class="c m" style="left:874px;top:656px;width:63px;height:31px;line-height:32px;background:#5b9bd5;">2</div>
<div class="c r" style="left:937px;top:657px;width:117px;height:30px;line-height:31px;">-422.97</div>
<div class="c r" style="left:1134px;top:657px;width:76px;height:30px;line-height:31px;">29172</div>
<div class="c r" style="left:1209px;top:656px;width:76px;height:31px;line-height:32px;background:#c6efce;color:#137024;">0.9947</div>
<div class="c r" style="left:1358px;top:656px;width:75px;height:31px;line-height:32px;background:#ffc7ce;color:#a8101c;">1.0099</div>
<div class="c r" style="left:1506px;top:656px;width:73px;height:31px;line-height:32px;background:#c6efce;color:#137024;">1</div>
<div class="c r" style="left:1285px;top:657px;width:74px;height:30px;line-height:31px;">28733</div>
<div class="c r" style="left:1433px;top:657px;width:74px;height:30px;line-height:31px;">29020</div>
<div class="c r" style="left:1644px;top:656px;width:95px;height:31px;line-height:32px;background:#c6efce;color:#137024;">41.9</div>
<div class="c m" style="left:37px;top:687px;width:105px;height:30px;line-height:31px;letter-spacing:1px;text-indent:1px;">2021/6/16</div>
<div class="c m" style="left:142px;top:687px;width:88px;height:30px;line-height:31px;">29,306.14</div>
<div class="c m" style="left:230px;top:687px;width:88px;height:30px;line-height:31px;">29,434.10</div>
<div class="c m" style="left:318px;top:687px;width:88px;height:30px;line-height:31px;">29,263.72</div>
<div class="c m" style="left:406px;top:687px;width:94px;height:30px;line-height:31px;">29,291.01</div>
<div class="c m" style="left:499px;top:686px;width:87px;height:31px;line-height:32px;background:#e8f4ee;">-150.29</div>
<div class="c m" style="left:585px;top:686px;width:87px;height:31px;line-height:32px;background:#eff7f4;">-0.5</div>
<div class="c m" style="left:672px;top:687px;width:126px;height:30px;line-height:31px;">884,022,500</div>
<div class="c m" style="left:797px;top:686px;width:78px;height:31px;line-height:30px;background:#c6efce;color:#137024;">陰</div>
<div class="c m" style="left:874px;top:686px;width:63px;height:31px;line-height:32px;background:#5b9bd5;">1</div>
<div class="c r" style="left:937px;top:687px;width:117px;height:30px;line-height:31px;">-150.29</div>
<div class="c r" style="left:1134px;top:687px;width:76px;height:30px;line-height:31px;">29160</div>
<div class="c r" style="left:1209px;top:686px;width:76px;height:31px;line-height:32px;background:#ffc7ce;color:#a8101c;">1.0045</div>
<div class="c r" style="left:1358px;top:686px;width:75px;height:31px;line-height:32px;background:#ffc7ce;color:#a8101c;">1.0217</div>
<div class="c r" style="left:1506px;top:686px;width:73px;height:31px;line-height:32px;background:#ffc7ce;color:#a8101c;">1.0089</div>
<div class="c r" style="left:1285px;top:687px;width:74px;height:30px;line-height:31px;">28670</div>
<div class="c r" style="left:1433px;top:687px;width:74px;height:30px;line-height:31px;">29032</div>
<div class="c r" style="left:1644px;top:686px;width:95px;height:31px;line-height:32px;background:#ffc7ce;color:#a8101c;">38.9</div>
<div class="c m" style="left:37px;top:717px;width:105px;height:30px;line-height:31px;letter-spacing:1px;text-indent:1px;">2021/6/15</div>
<div class="c m" style="left:142px;top:717px;width:88px;height:30px;line-height:31px;">29,256.03</div>
<div class="c m" style="left:230px;top:717px;width:88px;height:30px;line-height:31px;">29,480.85</div>
<div class="c m" style="left:318px;top:717px;width:88px;height:30px;line-height:31px;">29,235.71</div>
<div class="c m" style="left:406px;top:717px;width:94px;height:30px;line-height:31px;">29,441.30</div>
<div class="c m" style="left:499px;top:716px;width:87px;height:31px;line-height:32px;background:#fbdfe1;">279.5</div>
<div class="c m" style="left:585px;top:716px;width:87px;height:31px;line-height:32px;background:#fceaed;">1</div>
<div class="c m" style="left:672px;top:717px;width:126px;height:30px;line-height:31px;">807,759,600</div>
<div class="c m" style="left:797px;top:716px;width:78px;height:31px;line-height:30px;background:#ffc7ce;color:#a8101c;">陽</div>
<div class="c m" style="left:875px;top:717px;width:62px;height:30px;line-height:31px;">2</div>
<div class="c r" style="left:937px;top:717px;width:117px;height:30px;line-height:31px;">492.57</div>
<div class="c r" style="left:1134px;top:717px;width:76px;height:30px;line-height:31px;">29074</div>
<div class="c r" style="left:1209px;top:716px;width:76px;height:31px;line-height:32px;background:#ffc7ce;color:#a8101c;">1.0126</div>
<div class="c r" style="left:1358px;top:716px;width:75px;height:31px;line-height:32px;background:#ffc7ce;color:#a8101c;">1.0285</div>
<div class="c r" style="left:1506px;top:716px;width:73px;height:31px;line-height:32px;background:#ffc7ce;color:#a8101c;">1.0135</div>
<div class="c r" style="left:1285px;top:717px;width:74px;height:30px;line-height:31px;">28624</div>
<div class="c r" style="left:1433px;top:717px;width:74px;height:30px;line-height:31px;">29048</div>
<div class="c r" style="left:1644px;top:716px;width:95px;height:31px;line-height:32px;background:#ffc7ce;color:#a8101c;">38.2</div>
<div class="c m" style="left:37px;top:747px;width:105px;height:30px;line-height:31px;letter-spacing:1px;text-indent:1px;">2021/6/14</div>
<div class="c m" style="left:142px;top:747px;width:88px;height:30px;line-height:31px;">29,153.11</div>
<div class="c m" style="left:230px;top:747px;width:88px;height:30px;line-height:31px;">29,208.35</div>
<div class="c m" style="left:318px;top:747px;width:88px;height:30px;line-height:31px;">29,026.27</div>
<div class="c m" style="left:406px;top:747px;width:94px;height:30px;line-height:31px;">29,161.80</div>
<div class="c m" style="left:499px;top:746px;width:87px;height:31px;line-height:32px;background:#fbe6e8;">213.07</div>
<div class="c m" style="left:585px;top:746px;width:87px;height:31px;line-height:32px;background:#fceff2;">0.7</div>
<div class="c m" style="left:672px;top:747px;width:126px;height:30px;line-height:31px;">854,234,100</div>
<div class="c m" style="left:797px;top:746px;width:78px;height:31px;line-height:30px;background:#ffc7ce;color:#a8101c;">陽</div>
<div class="c m" style="left:875px;top:747px;width:62px;height:30px;line-height:31px;">1</div>
<div class="c r" style="left:937px;top:747px;width:117px;height:30px;line-height:31px;">213.07</div>
<div class="c r" style="left:1134px;top:747px;width:76px;height:30px;line-height:31px;">28979</div>
<div class="c r" style="left:1209px;top:746px;width:76px;height:31px;line-height:32px;background:#ffc7ce;color:#a8101c;">1.0063</div>
<div class="c r" style="left:1358px;top:746px;width:75px;height:31px;line-height:32px;background:#ffc7ce;color:#a8101c;">1.02</div>
<div class="c r" style="left:1506px;top:746px;width:73px;height:31px;line-height:32px;background:#ffc7ce;color:#a8101c;">1.0037</div>
<div class="c r" style="left:1285px;top:747px;width:74px;height:30px;line-height:31px;">28591</div>
<div class="c r" style="left:1433px;top:747px;width:74px;height:30px;line-height:31px;">29056</div>
<div class="c r" style="left:1644px;top:746px;width:95px;height:31px;line-height:32px;background:#ffc7ce;color:#a8101c;">38.5</div>
<div class="c m" style="left:37px;top:777px;width:105px;height:30px;line-height:31px;letter-spacing:1px;text-indent:1px;">2021/6/11</div>
<div class="c m" style="left:142px;top:777px;width:88px;height:30px;line-height:31px;">29,030.04</div>
<div class="c m" style="left:230px;top:777px;width:88px;height:30px;line-height:31px;">29,080.89</div>
<div class="c m" style="left:318px;top:777px;width:88px;height:30px;line-height:31px;">28,839.54</div>
<div class="c m" style="left:406px;top:777px;width:94px;height:30px;line-height:31px;">28,948.73</div>
<div class="c m" style="left:499px;top:776px;width:87px;height:31px;line-height:32px;background:#fbfbfe;">-9.83</div>
<div class="c m" style="left:585px;top:776px;width:87px;height:31px;line-height:32px;background:#fcfcff;">0</div>
<div class="c m" style="left:672px;top:777px;width:126px;height:30px;line-height:31px;">1,221,150,000</div>
<div class="c m" style="left:797px;top:776px;width:78px;height:31px;line-height:30px;background:#c6efce;color:#137024;">陰</div>
<div class="c m" style="left:875px;top:777px;width:62px;height:30px;line-height:31px;">1</div>
<div class="c r" style="left:937px;top:777px;width:117px;height:30px;line-height:31px;">-9.83</div>
<div class="c r" style="left:1134px;top:777px;width:76px;height:30px;line-height:31px;">28950</div>
<div class="c r" style="left:1209px;top:776px;width:76px;height:31px;line-height:32px;background:#c6efce;color:#137024;">0.9999</div>
<div class="c r" style="left:1358px;top:776px;width:75px;height:31px;line-height:32px;background:#ffc7ce;color:#a8101c;">1.012</div>
<div class="c r" style="left:1506px;top:776px;width:73px;height:31px;line-height:32px;background:#c6efce;color:#137024;">0.9959</div>
<div class="c r" style="left:1285px;top:777px;width:74px;height:30px;line-height:31px;">28605</div>
<div class="c r" style="left:1433px;top:777px;width:74px;height:30px;line-height:31px;">29068</div>
<div class="c r" style="left:1644px;top:776px;width:95px;height:31px;line-height:32px;background:#c6efce;color:#137024;">42.2</div>
<div class="c m" style="left:37px;top:807px;width:105px;height:30px;line-height:31px;letter-spacing:1px;text-indent:1px;">2021/6/10</div>
<div class="c m" style="left:142px;top:807px;width:88px;height:30px;line-height:31px;">28,799.74</div>
<div class="c m" style="left:230px;top:807px;width:88px;height:30px;line-height:31px;">29,007.53</div>
<div class="c m" style="left:318px;top:807px;width:88px;height:30px;line-height:31px;">28,799.74</div>
<div class="c m" style="left:406px;top:807px;width:94px;height:30px;line-height:31px;">28,958.56</div>
<div class="c m" style="left:499px;top:806px;width:87px;height:31px;line-height:32px;background:#fcf2f5;">97.76</div>
<div class="c m" style="left:585px;top:806px;width:87px;height:31px;line-height:32px;background:#fcf7fa;">0.3</div>
<div class="c m" style="left:672px;top:807px;width:126px;height:30px;line-height:31px;">873,742,000</div>
<div class="c m" style="left:797px;top:806px;width:78px;height:31px;line-height:30px;background:#ffc7ce;color:#a8101c;">陽</div>
<div class="c m" style="left:875px;top:807px;width:62px;height:30px;line-height:31px;">1</div>
<div class="c r" style="left:937px;top:807px;width:117px;height:30px;line-height:31px;">97.76</div>
<div class="c r" style="left:1134px;top:807px;width:76px;height:30px;line-height:31px;">28949</div>
<div class="c r" style="left:1209px;top:806px;width:76px;height:31px;line-height:32px;background:#ffc7ce;color:#a8101c;">1.0003</div>
<div class="c r" style="left:1358px;top:806px;width:75px;height:31px;line-height:32px;background:#ffc7ce;color:#a8101c;">1.0118</div>
<div class="c r" style="left:1506px;top:806px;width:73px;height:31px;line-height:32px;background:#c6efce;color:#137024;">0.9958</div>
<div class="c r" style="left:1285px;top:807px;width:74px;height:30px;line-height:31px;">28622</div>
<div class="c r" style="left:1433px;top:807px;width:74px;height:30px;line-height:31px;">29082</div>
<div class="c r" style="left:1644px;top:806px;width:95px;height:31px;line-height:32px;background:#ffc7ce;color:#a8101c;">38.4</div>
<div class="c m" style="left:37px;top:837px;width:105px;height:30px;line-height:31px;letter-spacing:1px;text-indent:1px;">2021/6/9</div>
<div class="c m" style="left:142px;top:837px;width:88px;height:30px;line-height:31px;">28,901.56</div>
<div class="c m" style="left:230px;top:837px;width:88px;height:30px;line-height:31px;">28,932.03</div>
<div class="c m" style="left:318px;top:837px;width:88px;height:30px;line-height:31px;">28,801.83</div>
<div class="c m" style="left:406px;top:837px;width:94px;height:30px;line-height:31px;">28,860.80</div>
<div class="c m" style="left:499px;top:836px;width:87px;height:31px;line-height:32px;background:#eff7f3;">-102.76</div>
<div class="c m" style="left:585px;top:836px;width:87px;height:31px;line-height:32px;background:#f2f8f6;">-0.4</div>
<div class="c m" style="left:672px;top:837px;width:126px;height:30px;line-height:31px;">994,452,100</div>
<div class="c m" style="left:797px;top:836px;width:78px;height:31px;line-height:30px;background:#c6efce;color:#137024;">陰</div>
<div class="c m" style="left:874px;top:836px;width:63px;height:31px;line-height:32px;background:#5b9bd5;">3</div>
<div class="c r" style="left:937px;top:837px;width:117px;height:30px;line-height:31px;">-80.72</div>
<div class="c r" style="left:1134px;top:837px;width:76px;height:30px;line-height:31px;">28969</div>
<div class="c r" style="left:1209px;top:836px;width:76px;height:31px;line-height:32px;background:#c6efce;color:#137024;">0.9963</div>
<div class="c r" style="left:1358px;top:836px;width:75px;height:31px;line-height:32px;background:#ffc7ce;color:#a8101c;">1.0078</div>
<div class="c r" style="left:1506px;top:836px;width:73px;height:31px;line-height:32px;background:#c6efce;color:#137024;">0.992</div>
<div class="c r" style="left:1285px;top:837px;width:74px;height:30px;line-height:31px;">28636</div>
<div class="c r" style="left:1433px;top:837px;width:74px;height:30px;line-height:31px;">29095</div>
<div class="c r" style="left:1644px;top:836px;width:95px;height:31px;line-height:32px;background:#c6efce;color:#137024;">40.9</div>
<div class="c m" style="left:37px;top:867px;width:105px;height:30px;line-height:31px;letter-spacing:1px;text-indent:1px;">2021/6/8</div>
<div class="c m" style="left:142px;top:867px;width:88px;height:30px;line-height:31px;">29,046.03</div>
<div class="c m" style="left:230px;top:867px;width:88px;height:30px;line-height:31px;">29,140.68</div>
<div class="c m" style="left:318px;top:867px;width:88px;height:30px;line-height:31px;">28,897.64</div>
<div class="c m" style="left:406px;top:867px;width:94px;height:30px;line-height:31px;">28,963.56</div>
<div class="c m" style="left:499px;top:866px;width:87px;height:31px;line-height:32px;background:#f5f9f9;">-55.68</div>
<div class="c m" style="left:585px;top:866px;width:87px;height:31px;line-height:32px;background:#f7fafb;">-0.2</div>
<div class="c m" style="left:672px;top:867px;width:126px;height:30px;line-height:31px;">928,662,000</div>
<div class="c m" style="left:797px;top:866px;width:78px;height:31px;line-height:30px;background:#c6efce;color:#137024;">陰</div>
<div class="c m" style="left:874px;top:866px;width:63px;height:31px;line-height:32px;background:#5b9bd5;">2</div>
<div class="c r" style="left:937px;top:867px;width:117px;height:30px;line-height:31px;">22.04</div>
<div class="c r" style="left:1134px;top:867px;width:76px;height:30px;line-height:31px;">28986</div>
<div class="c r" style="left:1209px;top:866px;width:76px;height:31px;line-height:32px;background:#c6efce;color:#137024;">0.9992</div>
<div class="c r" style="left:1358px;top:866px;width:75px;height:31px;line-height:32px;background:#ffc7ce;color:#a8101c;">1.0115</div>
<div class="c r" style="left:1506px;top:866px;width:73px;height:31px;line-height:32px;background:#c6efce;color:#137024;">0.9953</div>
<div class="c r" style="left:1285px;top:867px;width:74px;height:30px;line-height:31px;">28635</div>
<div class="c r" style="left:1433px;top:867px;width:74px;height:30px;line-height:31px;">29101</div>
<div class="c r" style="left:1644px;top:866px;width:95px;height:31px;line-height:32px;background:#c6efce;color:#137024;">42.1</div>
<div class="c m" style="left:37px;top:897px;width:105px;height:30px;line-height:31px;letter-spacing:1px;text-indent:1px;">2021/6/7</div>
<div class="c m" style="left:142px;top:897px;width:88px;height:30px;line-height:31px;">29,214.00</div>
<div class="c m" style="left:230px;top:897px;width:88px;height:30px;line-height:31px;">29,241.20</div>
<div class="c m" style="left:318px;top:897px;width:88px;height:30px;line-height:31px;">28,973.05</div>
<div class="c m" style="left:406px;top:897px;width:94px;height:30px;line-height:31px;">29,019.24</div>
<div class="c m" style="left:499px;top:896px;width:87px;height:31px;line-height:32px;background:#fcf4f7;">77.72</div>
<div class="c m" style="left:585px;top:896px;width:87px;height:31px;line-height:32px;background:#fcf7fa;">0.3</div>
<div class="c m" style="left:672px;top:897px;width:126px;height:30px;line-height:31px;">945,920,700</div>
<div class="c m" style="left:797px;top:896px;width:78px;height:31px;line-height:30px;background:#c6efce;color:#137024;">陰</div>
<div class="c m" style="left:874px;top:896px;width:63px;height:31px;line-height:32px;background:#5b9bd5;">1</div>
<div class="c r" style="left:937px;top:897px;width:117px;height:30px;line-height:31px;">77.72</div>
<div class="c r" style="left:1134px;top:897px;width:76px;height:30px;line-height:31px;">28956</div>
<div class="c r" style="left:1209px;top:896px;width:76px;height:31px;line-height:32px;background:#ffc7ce;color:#a8101c;">1.0022</div>
<div class="c r" style="left:1358px;top:896px;width:75px;height:31px;line-height:32px;background:#ffc7ce;color:#a8101c;">1.0133</div>
<div class="c r" style="left:1506px;top:896px;width:73px;height:31px;line-height:32px;background:#c6efce;color:#137024;">0.9972</div>
<div class="c r" style="left:1285px;top:897px;width:74px;height:30px;line-height:31px;">28638</div>
<div class="c r" style="left:1433px;top:897px;width:74px;height:30px;line-height:31px;">29102</div>
<div class="c r" style="left:1644px;top:896px;width:95px;height:31px;line-height:32px;background:#c6efce;color:#137024;">43.1</div>
<div class="c m" style="left:37px;top:927px;width:105px;height:30px;line-height:31px;letter-spacing:1px;text-indent:1px;">2021/6/4</div>
<div class="c m" style="left:142px;top:927px;width:88px;height:30px;line-height:31px;">28,901.42</div>
<div class="c m" style="left:230px;top:927px;width:88px;height:30px;line-height:31px;">28,991.24</div>
<div class="c m" style="left:318px;top:927px;width:88px;height:30px;line-height:31px;">28,764.68</div>
<div class="c m" style="left:406px;top:927px;width:94px;height:30px;line-height:31px;">28,941.52</div>
<div class="c m" style="left:499px;top:926px;width:87px;height:31px;line-height:32px;background:#edf6f2;">-116.59</div>
<div class="c m" style="left:585px;top:926px;width:87px;height:31px;line-height:32px;background:#f2f8f6;">-0.4</div>
<div class="c m" style="left:672px;top:927px;width:126px;height:30px;line-height:31px;">1,056,821,400</div>
<div class="c m" style="left:797px;top:926px;width:78px;height:31px;line-height:30px;background:#ffc7ce;color:#a8101c;">陽</div>
<div class="c m" style="left:875px;top:927px;width:62px;height:30px;line-height:31px;">3</div>
<div class="c r" style="left:937px;top:927px;width:117px;height:30px;line-height:31px;">127.18</div>
<div class="c r" style="left:1134px;top:927px;width:76px;height:30px;line-height:31px;">28924</div>
<div class="c r" style="left:1209px;top:926px;width:76px;height:31px;line-height:32px;background:#ffc7ce;color:#a8101c;">1.0006</div>
<div class="c r" style="left:1358px;top:926px;width:75px;height:31px;line-height:32px;background:#ffc7ce;color:#a8101c;">1.0106</div>
<div class="c r" style="left:1506px;top:926px;width:73px;height:31px;line-height:32px;background:#c6efce;color:#137024;">0.9945</div>
<div class="c r" style="left:1285px;top:927px;width:74px;height:30px;line-height:31px;">28637</div>
<div class="c r" style="left:1433px;top:927px;width:74px;height:30px;line-height:31px;">29102</div>
<div class="c r" style="left:1644px;top:926px;width:95px;height:31px;line-height:32px;background:#c6efce;color:#137024;">41.8</div>
<div class="c m" style="left:37px;top:957px;width:105px;height:30px;line-height:31px;letter-spacing:1px;text-indent:1px;">2021/6/3</div>
<div class="c m" style="left:142px;top:957px;width:88px;height:30px;line-height:31px;">28,890.39</div>
<div class="c m" style="left:230px;top:957px;width:88px;height:30px;line-height:31px;">29,157.16</div>
<div class="c m" style="left:318px;top:957px;width:88px;height:30px;line-height:31px;">28,879.15</div>
<div class="c m" style="left:406px;top:957px;width:94px;height:30px;line-height:31px;">29,058.11</div>
<div class="c m" style="left:499px;top:956px;width:87px;height:31px;line-height:32px;background:#fcf0f3;">111.97</div>
<div class="c m" style="left:585px;top:956px;width:87px;height:31px;line-height:32px;background:#fcf5f8;">0.4</div>
<div class="c m" style="left:672px;top:957px;width:126px;height:30px;line-height:31px;">1,091,982,100</div>
<div class="c m" style="left:797px;top:956px;width:78px;height:31px;line-height:30px;background:#ffc7ce;color:#a8101c;">陽</div>
<div class="c m" style="left:875px;top:957px;width:62px;height:30px;line-height:31px;">2</div>
<div class="c r" style="left:937px;top:957px;width:117px;height:30px;line-height:31px;">243.77</div>
<div class="c r" style="left:1134px;top:957px;width:76px;height:30px;line-height:31px;">28966</div>
<div class="c r" style="left:1209px;top:956px;width:76px;height:31px;line-height:32px;background:#ffc7ce;color:#a8101c;">1.0032</div>
<div class="c r" style="left:1358px;top:956px;width:75px;height:31px;line-height:32px;background:#ffc7ce;color:#a8101c;">1.0144</div>
<div class="c r" style="left:1506px;top:956px;width:73px;height:31px;line-height:32px;background:#c6efce;color:#137024;">0.9986</div>
<div class="c r" style="left:1285px;top:957px;width:74px;height:30px;line-height:31px;">28644</div>
<div class="c r" style="left:1433px;top:957px;width:74px;height:30px;line-height:31px;">29099</div>
<div class="c r" style="left:1644px;top:956px;width:95px;height:31px;line-height:32px;background:#ffc7ce;color:#a8101c;">39</div>
<div id="sel"></div><div id="selh"></div>
</div>
</div>
<div id="colhdr">
<div class="chl" style="left:36px;top:6px;height:23px"></div>
<svg style="position:absolute;left:0;top:0" width="36" height="29"><polygon points="12,25.5 33,4.5 33,25.5" fill="#b4b4b4"/></svg>
<div class="ch" style="left:37px;width:104px">A</div>
<div class="chl" style="left:141px"></div>
<div class="ch" style="left:142px;width:87px">B</div>
<div class="chl" style="left:229px"></div>
<div class="ch" style="left:230px;width:87px">C</div>
<div class="chl" style="left:317px"></div>
<div class="ch" style="left:318px;width:87px">D</div>
<div class="chl" style="left:405px"></div>
<div class="ch" style="left:406px;width:93px">E</div>
<div class="chl" style="left:499px"></div>
<div class="ch" style="left:500px;width:85px">F</div>
<div class="chl" style="left:585px"></div>
<div class="ch" style="left:586px;width:85px">G</div>
<div class="chl" style="left:671px"></div>
<div class="ch" style="left:672px;width:125px">H</div>
<div class="chl" style="left:797px"></div>
<div class="ch" style="left:798px;width:76px">I</div>
<div class="chl" style="left:874px"></div>
<div class="ch" style="left:875px;width:61px">J</div>
<div class="chl" style="left:936px"></div>
<div class="ch" style="left:937px;width:116px">K</div>
<div class="chl" style="left:1053px"></div>
<div class="ch" style="left:1054px;width:79px">L</div>
<div class="chl" style="left:1133px"></div>
<div class="ch" style="left:1134px;width:75px">M</div>
<div class="chl" style="left:1209px"></div>
<div class="ch" style="left:1210px;width:74px">N</div>
<div class="chl" style="left:1284px"></div>
<div class="ch" style="left:1285px;width:73px">O</div>
<div class="chl" style="left:1358px"></div>
<div class="ch sel" style="left:1359px;width:73px">P</div>
<div class="chl" style="left:1432px"></div>
<div class="ch" style="left:1433px;width:73px">Q</div>
<div class="chl" style="left:1506px"></div>
<div class="ch" style="left:1507px;width:71px">R</div>
<div class="chl" style="left:1578px"></div>
<div class="ch" style="left:1579px;width:65px">S</div>
<div class="chl" style="left:1644px"></div>
<div class="ch" style="left:1645px;width:93px">T</div>
<div class="chl" style="left:1738px"></div>
<div class="ch" style="left:1739px;width:87px">U</div>
<div class="chl" style="left:1826px"></div>
<div class="ch" style="left:1827px;width:88px">V</div>
<div class="chl" style="left:1894px"></div>
</div>
<div id="rowhdr">
<div class="rh" style="top:0px">1</div>
<div class="rh" style="top:30px">2</div>
<div class="rh" style="top:60px">3</div>
<div class="rh sel" style="top:90px">4</div>
<div class="rh" style="top:120px">5</div>
<div class="rh" style="top:150px">6</div>
<div class="rh" style="top:180px">7</div>
<div class="rh" style="top:210px">8</div>
<div class="rh" style="top:240px">9</div>
<div class="rh" style="top:270px">10</div>
<div class="rh" style="top:300px">11</div>
<div class="rh" style="top:330px">12</div>
<div class="rh" style="top:360px">13</div>
<div class="rh" style="top:390px">14</div>
<div class="rh" style="top:420px">15</div>
<div class="rh" style="top:450px">16</div>
<div class="rh" style="top:480px">17</div>
<div class="rh" style="top:510px">18</div>
<div class="rh" style="top:540px">19</div>
<div class="rh" style="top:570px">20</div>
<div class="rh" style="top:600px">21</div>
<div class="rh" style="top:630px">22</div>
<div class="rh" style="top:660px">23</div>
<div class="rh" style="top:690px">24</div>
<div class="rh" style="top:720px">25</div>
<div class="rh" style="top:750px">26</div>
</div>
<div class="abs" style="left:1895px;top:177px;width:25px;height:798px;background:#e6e6e6"></div>
<div class="abs" style="left:1898px;top:198px;width:19px;height:759px;background:#dadada"></div>
<div class="abs" style="left:1898px;top:179px;width:19px;height:19px;background:#fff;border:1px solid #ababab"></div>
<svg class="abs" style="left:1902px;top:184px" width="11" height="7"><path d="M0.5 6 L5.5 1 L10.5 6 Z" fill="#666"/></svg>
<div class="abs" style="left:1898px;top:199px;width:19px;height:53px;background:#fff;border:1px solid #ababab"></div>
<div class="abs" style="left:1894px;top:207px;width:1px;height:769px;background:#ababab"></div>
<div id="tabs">
<svg class="abs" style="left:26px;top:8px" width="40" height="12"><path d="M7 0.5 V11.5 L1 6 Z" fill="#217346"/><path d="M29 0.5 V11.5 L35 6 Z" fill="#217346"/></svg>
<svg class="abs" style="left:79px;top:15.5px" width="16" height="4"><rect x="0" y="0" width="2.4" height="2.4" fill="#217346"/><rect x="5.5" y="0" width="2.4" height="2.4" fill="#217346"/><rect x="11" y="0" width="2.4" height="2.4" fill="#217346"/></svg>
<div class="abs" style="left:100px;top:4px;width:1px;height:22px;background:#b0b0b0"></div>
<div class="t" data-w="125" style="transform:scaleX(0.9191);left:114.0px;top:3.1px;font-size:17px;color:#555;font-weight:normal;">業種別張り付けば</div>
<div class="abs" style="left:253px;top:4px;width:1px;height:22px;background:#b0b0b0"></div>
<div class="abs" style="left:256px;top:3px;width:104px;height:22px;background:#ed7d31"></div>
<div class="t" data-w="81" style="transform:scaleX(0.9529);left:268.0px;top:3.1px;font-size:17px;color:#222;font-weight:normal;">業種別株価</div>
<div class="abs" style="left:365px;top:3px;width:69px;height:22px;background:#ed7d31"></div>
<div class="t" data-w="49" style="transform:scaleX(0.9608);left:375.0px;top:3.1px;font-size:17px;color:#222;font-weight:normal;">業種別</div>
<div class="abs" style="left:440px;top:3px;width:94px;height:22px;background:#ed7d31"></div>
<div class="t" data-w="73" style="transform:scaleX(1.0429);left:450.0px;top:3.1px;font-size:17px;color:#222;font-weight:normal;">20日騰落</div>
<div class="abs" style="left:538px;top:3px;width:176px;height:22px;background:#ed7d31"></div>
<div class="t" data-w="147" style="transform:scaleX(0.8647);left:551.0px;top:3.1px;font-size:17px;color:#222;font-weight:normal;">日別と株価による診断</div>
<div class="abs" style="left:719px;top:3px;width:108px;height:22px;background:#ed7d31"></div>
<div class="t" data-w="86" style="transform:scaleX(0.9556);left:730.0px;top:3.1px;font-size:17px;color:#222;font-weight:normal;">累計 データ</div>
<div class="abs" style="left:362px;top:4px;width:1px;height:22px;background:#b0b0b0"></div>
<div class="abs" style="left:436px;top:4px;width:1px;height:22px;background:#b0b0b0"></div>
<div class="abs" style="left:536px;top:4px;width:1px;height:22px;background:#b0b0b0"></div>
<div class="abs" style="left:716px;top:4px;width:1px;height:22px;background:#b0b0b0"></div>
<div class="t" data-w="118" style="transform:scaleX(0.8676);left:841.0px;top:3.1px;font-size:17px;color:#555;font-weight:normal;">トレンド統計関連</div>
<div class="abs" style="left:972px;top:0px;width:95px;height:25px;background:#fff;border-left:1px solid #b0b0b0;border-right:1px solid #b0b0b0"></div>
<div class="abs" style="left:975px;top:4px;width:89px;height:18px;background:linear-gradient(#fff,#fdd 45%,#f7a4a4)"></div>
<div class="abs" style="left:972px;top:23px;width:95px;height:2px;background:#217346"></div>
<div class="t" data-w="65" style="transform:scaleX(1.0484);left:986.0px;top:2.1px;font-size:17px;color:#217346;font-weight:normal;">日経225</div>
<div class="abs" style="left:1069px;top:3px;width:11px;height:22px;background:#ff0000"></div>
<svg class="abs" style="left:1088px;top:14.5px" width="16" height="4"><rect x="0" y="0" width="2.4" height="2.4" fill="#217346"/><rect x="5" y="0" width="2.4" height="2.4" fill="#217346"/><rect x="10" y="0" width="2.4" height="2.4" fill="#217346"/></svg>
<svg class="abs" style="left:1111px;top:4px" width="22" height="22"><circle cx="11" cy="11" r="9.5" fill="none" stroke="#c9c9c9" stroke-width="1.2"/><path d="M11 5.5 V16.5 M5.5 11 H16.5" stroke="#c9c9c9" stroke-width="1.6"/></svg>
<svg class="abs" style="left:1147px;top:8px" width="5" height="14"><rect x="0.5" y="0" width="3" height="3" fill="#aaa"/><rect x="0.5" y="5" width="3" height="3" fill="#aaa"/><rect x="0.5" y="10" width="3" height="3" fill="#aaa"/></svg>
<div class="abs" style="left:1166px;top:5px;width:19px;height:19px;background:#fff;border:1px solid #ababab"></div>
<svg class="abs" style="left:1172px;top:9px" width="7" height="11"><path d="M6 0.5 V10.5 L1 5.5 Z" fill="#666"/></svg>
<div class="abs" style="left:1185px;top:5px;width:658px;height:19px;background:#fff;border:1px solid #ababab"></div>
<div class="abs" style="left:1843px;top:6px;width:33px;height:17px;background:#dadada"></div>
<div class="abs" style="left:1876px;top:5px;width:19px;height:19px;background:#fff;border:1px solid #ababab"></div>
<svg class="abs" style="left:1883px;top:9px" width="7" height="11"><path d="M1 0.5 V10.5 L6 5.5 Z" fill="#666"/></svg>
<div class="abs" style="left:0;top:0;width:972px;height:1px;background:#ababab"></div>
<div class="abs" style="left:1067px;top:0;width:828px;height:1px;background:#ababab"></div>
<div class="abs" style="left:1898px;top:-18px;width:19px;height:19px;background:#fff;border:1px solid #ababab"></div>
<svg class="abs" style="left:1902px;top:-12px" width="11" height="7"><path d="M0.5 1 L5.5 6 L10.5 1 Z" fill="#666"/></svg>
</div>
<div id="status">
<div class="t" data-w="59" style="transform:scaleX(0.9219);left:9.0px;top:6.5px;font-size:16px;color:#333;font-weight:normal;">準備完了</div>
<div class="abs" style="left:1538px;top:0;width:50px;height:27px;background:#c6c6c6"></div>
<svg class="abs" style="left:1554px;top:5px" width="18" height="17" viewBox="0 0 18 17"><g fill="none" stroke="#555" stroke-width="1.2">
<rect x="1" y="1" width="15" height="15"/><path d="M6 1 V16 M11 1 V16 M1 6 H16 M1 11 H16"/></g></svg>
<svg class="abs" style="left:1603px;top:5px" width="19" height="17" viewBox="0 0 19 17"><g fill="none" stroke="#666" stroke-width="1.2">
<rect x="1" y="1" width="16" height="15"/><rect x="4" y="3.5" width="10" height="10"/><path d="M6 6 H12 M6 8.5 H12 M6 11 H12"/></g></svg>
<svg class="abs" style="left:1653px;top:5px" width="19" height="17" viewBox="0 0 19 17"><g fill="none" stroke="#666" stroke-width="1.2">
<rect x="1" y="1" width="16" height="15"/><path d="M1 10 H11 V1 M6 1 V10"/></g></svg>
<div class="abs" style="left:1695px;top:13px;width:10px;height:1.5px;background:#555"></div>
<div class="abs" style="left:1711px;top:13.5px;width:125px;height:1px;background:#999"></div>
<div class="abs" style="left:1771px;top:7px;width:6px;height:14px;background:#666"></div>
<svg class="abs" style="left:1841px;top:8px" width="12" height="12"><path d="M6 0.5 V11.5 M0.5 6 H11.5" stroke="#555" stroke-width="1.4"/></svg>
<div class="t" data-w="40" style="transform:scaleX(0.9756);left:1869.0px;top:6.5px;font-size:16px;color:#333;font-weight:normal;">100%</div>
</div>
<div id="taskbar">
<svg class="abs" style="left:19px;top:15px" width="22" height="21" viewBox="0 0 22 21"><g fill="#111">
<path d="M0 2.8 L9 1.6 V10 H0 Z"/><path d="M10 1.4 L22 0 V10 H10 Z"/><path d="M0 11 H9 V19.4 L0 18.2 Z"/><path d="M10 11 H22 V21 L10 19.6 Z"/></g></svg>
<div class="abs" style="left:60px;top:1px;width:430px;height:49px;background:#fff;border:1px solid #cfcfcf;border-bottom:none"></div>
<svg class="abs" style="left:74px;top:15px" width="23" height="20" viewBox="0 0 23 20"><g fill="none" stroke="#222" stroke-width="1.6">
<circle cx="14" cy="8" r="6.3"/><path d="M9.5 12.5 L1.5 19.5"/></g></svg>
<div class="t" data-w="141" style="transform:scaleX(0.9216);left:110.0px;top:17.6px;font-size:17px;color:#444;font-weight:normal;">ここに入力して検索</div>
<svg class="abs" style="left:509px;top:15px" width="22" height="22"><circle cx="11" cy="10.5" r="8.3" fill="none" stroke="#111" stroke-width="2.6"/></svg>
<svg class="abs" style="left:567px;top:15px" width="24" height="22" viewBox="0 0 24 22"><g fill="none" stroke="#111" stroke-width="1.6">
<rect x="3" y="6" width="12" height="10"/><path d="M1 3 H17 M1 19 H17 M20 2 V6 M20 9 V13 M20 16 V20"/></g></svg>
<svg class="abs" style="left:629px;top:12px" width="30" height="26" viewBox="0 0 30 26">
<path d="M1 3 H11 L13 5.5 H29 V24 H1 Z" fill="#f8c43d"/><path d="M1 7 H29 V24 H1 Z" fill="#ffd965"/>
<path d="M6 14 H24 V24 H19 V18 H11 V24 H6 Z" fill="#2f8fd8"/></svg>
<div class="abs" style="left:619px;top:47px;width:51px;height:3px;background:#3b87d6"></div>
<svg class="abs" style="left:690px;top:9px" width="31" height="32" viewBox="0 0 31 32">
<path d="M9 9 V5 C9 2 11 1 15.5 1 C20 1 22 2 22 5 V9" fill="none" stroke="#222" stroke-width="2.2"/>
<rect x="1" y="8" width="29" height="23" rx="1.5" fill="#2b2b2b"/>
<rect x="10" y="14" width="5" height="5" fill="#f35325"/><rect x="16" y="14" width="5" height="5" fill="#81bc06"/>
<rect x="10" y="20" width="5" height="5" fill="#05a6f0"/><rect x="16" y="20" width="5" height="5" fill="#ffba08"/></svg>
<svg class="abs" style="left:753px;top:11px" width="31" height="28" viewBox="0 0 31 28">
<path d="M0 10 L15.5 0 L31 10 V28 H0 Z" fill="#1174c9"/><path d="M3 7 H28 V14 L15.5 22 L3 14 Z" fill="#fff"/>
<path d="M0 10 L15.5 20 L31 10 V28 H0 Z" fill="#27a4ef"/></svg>
<svg class="abs" style="left:815px;top:10px" width="30" height="30" viewBox="0 0 30 30">
<rect width="30" height="30" fill="#f15a2b"/><circle cx="15" cy="15" r="11" fill="#fff"/>
<circle cx="15" cy="13" r="5" fill="none" stroke="#f15a2b" stroke-width="1.6"/><path d="M7 23 C9 18 21 18 23 23" fill="none" stroke="#f15a2b" stroke-width="1.6"/></svg>
<svg class="abs" style="left:878px;top:11px" width="27" height="26" viewBox="0 0 27 26">
<rect width="27" height="26" rx="3" fill="#2f56d8"/><text x="13.5" y="15" font-size="16" text-anchor="middle" fill="#fff" font-family="Liberation Sans">@</text>
<text x="13.5" y="24" font-size="7" text-anchor="middle" fill="#fff" font-family="Liberation Sans">menu</text></svg>
<svg class="abs" style="left:939px;top:10px" width="30" height="30" viewBox="0 0 30 30">
<defs><linearGradient id="eg" x1="0" y1="0.7" x2="1" y2="0.3"><stop offset="0" stop-color="#1a78d4"/><stop offset="0.5" stop-color="#2fa6e0"/><stop offset="1" stop-color="#5ddf58"/></linearGradient></defs>
<circle cx="15" cy="15" r="15" fill="url(#eg)"/>
<path d="M0.2 14 C0.5 23 7 30 15.5 30 C21 30 25.5 27 28.5 23.5 C24.5 25.5 19.5 25.5 16 23.5 C12.5 21.5 10.5 18.5 10.5 15.5 C10.5 12 13 9.5 16.5 9.5 C11 7.5 4 9 0.2 14 Z" fill="#1f7fd6"/>
<path d="M10.5 15.5 C10.5 21 15 25.5 20.5 25.8 C23.5 26 26.5 25 28.5 23.5 C26 28 21 30 15.5 30 C11 30 7 27.5 5.5 24 C8.5 26 11 23 10.5 15.5 Z" fill="#1654a8"/>
<path d="M11.5 16 C11.5 13 13.5 11 16.2 11 C19 11 20.8 12.8 21 15.2 L29.5 17 L29.8 20.5 C26 21.5 22 21.8 19 21.3 C14.5 20.5 11.5 18.8 11.5 16 Z" fill="#dedbdf"/>
</svg>
<div class="abs" style="left:929px;top:47px;width:51px;height:3px;background:#3b87d6"></div>
<svg class="abs" style="left:1002px;top:11px" width="28" height="28" viewBox="0 0 28 28">
<defs><linearGradient id="pg" x1="0" y1="0" x2="1" y2="1"><stop offset="0" stop-color="#1fb0ee"/><stop offset="0.6" stop-color="#4a9ae8"/><stop offset="1" stop-color="#8a7ee0"/></linearGradient>
<linearGradient id="mg" x1="0" y1="0" x2="0" y2="1"><stop offset="0" stop-color="#1f4f99"/><stop offset="1" stop-color="#173a78"/></linearGradient></defs>
<rect width="28" height="28" rx="1.5" fill="url(#pg)"/>
<path d="M16 15 L19 13 L28 21 V28 H22 Z" fill="#4666cc"/>
<path d="M0 28 V17 L8 10 L26 28 Z" fill="url(#mg)"/>
<circle cx="18.5" cy="6.5" r="2.3" fill="#f4f4f4"/></svg>
<div class="abs" style="left:991px;top:47px;width:52px;height:3px;background:#3b87d6"></div>
<div class="abs" style="left:1048px;top:0;width:62px;height:50px;background:#ececef"></div>
<svg class="abs" style="left:1063px;top:11px" width="30" height="28" viewBox="0 0 30 28">
<rect x="8" y="0" width="22" height="28" rx="1.5" fill="#21a366"/><rect x="8" y="0" width="22" height="7" fill="#33c481"/>
<rect x="8" y="14" width="22" height="7" fill="#107c41"/><rect x="8" y="21" width="22" height="7" fill="#185c37"/>
<rect x="19" y="0" width="11" height="28" fill="#000" opacity="0.08"/>
<rect x="0" y="6" width="16" height="16" rx="1.5" fill="#107c41"/><path d="M4 9.5 L7 14 L4 18.5 H6.2 L8 15.5 L9.8 18.5 H12 L9 14 L12 9.5 H9.8 L8 12.5 L6.2 9.5 Z" fill="#fff"/></svg>
<div class="abs" style="left:1048px;top:47px;width:62px;height:3px;background:#3b87d6"></div>
<svg class="abs" style="left:1445px;top:14px" width="30" height="21" viewBox="0 0 30 21">
<path d="M6 20 C2 20 0.5 17 1.5 14.5 C2.5 12 5 11.5 6.5 12 C6.5 7 10 4 14.5 4 C18 4 20.5 6 21.5 8.5 C26 8 29 11 29 14.5 C29 18 26.5 20 23.5 20 Z" fill="#bfe4f7" stroke="#7cc4ea" stroke-width="1"/></svg>
<div class="t" data-w="84" style="transform:scaleX(0.8936);left:1485.0px;top:17.1px;font-size:17px;color:#111;font-weight:normal;">27°C くもり</div>
<svg class="abs" style="left:1590px;top:19px" width="18" height="11"><path d="M1 10 L9 2 L17 10" fill="none" stroke="#111" stroke-width="1.6"/></svg>
<svg class="abs" style="left:1618px;top:17px" width="22" height="15" viewBox="0 0 22 15">
<path d="M5 14 C2 14 1 12 1 10.5 C1 8.5 3 7 5 7.5 C6 4 8.5 2 12 2 C15 2 17.5 4 18 7 C20 7 21 9 21 11 C21 13 19.5 14 18 14 Z" fill="#999" stroke="#222" stroke-width="1.3"/></svg>
<svg class="abs" style="left:1648px;top:17px" width="22" height="16" viewBox="0 0 22 16">
<rect x="4.3" y="3.2" width="14.8" height="10" fill="none" stroke="#111" stroke-width="1.3"/><rect x="5.5" y="4.5" width="10.5" height="7.5" fill="#111"/>
<rect x="19" y="6" width="1.6" height="4" fill="#111"/>
<path d="M1.5 0.5 V3 M4 0.5 V3" stroke="#111" stroke-width="0.9"/><path d="M0.8 3 H4.7 V5 C4.7 6.5 3.8 7 2.75 7 C1.7 7 0.8 6.5 0.8 5 Z" fill="#111"/><path d="M2.75 7 V14.5" stroke="#111" stroke-width="1.1"/></svg>
<svg class="abs" style="left:1681px;top:15px" width="18" height="18" viewBox="0 0 18 18"><g fill="none" stroke="#111" stroke-width="1.2">
<path d="M10.5 16.5 A4.5 4.5 0 0 1 15 12"/><path d="M6 16.5 A9 9 0 0 1 15 7.5"/><path d="M1.5 16.5 A13.5 13.5 0 0 1 15 3"/></g>
<circle cx="14.3" cy="15.8" r="1.2" fill="#111"/></svg>
<svg class="abs" style="left:1709px;top:16px" width="21" height="18" viewBox="0 0 21 18"><g fill="none" stroke="#111" stroke-width="1.3">
<path d="M1 6 H5 L10 1.5 V16.5 L5 12 H1 Z"/><path d="M13 6 C14.5 7.5 14.5 10.5 13 12"/><path d="M16 4 C18.5 6.5 18.5 11.5 16 14" opacity="0.6"/></g></svg>
<div class="t" data-w="14" style="transform:scaleX(0.8235);left:1741.0px;top:12.5px;font-size:26px;color:#111;font-weight:normal;">A</div>
<div class="t" data-w="34" style="transform:scaleX(0.8947);left:1791.0px;top:5.8px;font-size:15px;color:#111;font-weight:normal;">19:43</div>
<div class="t" data-w="75" style="transform:scaleX(1.0000);left:1770.0px;top:29.3px;font-size:15px;color:#111;font-weight:normal;">2021/07/07</div>
<svg class="abs" style="left:1866px;top:13px" width="36" height="36" viewBox="0 0 36 36">
<path d="M3 2 H23 V19 H9 L4.5 23 V19 H3 Z" fill="#0a0a0a"/><path d="M7 6.5 H19 M7 10.5 H19 M7 14.5 H19" stroke="#fff" stroke-width="1.3"/>
<circle cx="22.5" cy="21" r="9.6" fill="rgba(222,222,222,0.88)" stroke="#8a8a8a" stroke-width="1"/><text x="22.5" y="26.5" font-size="15" text-anchor="middle" fill="#111" font-family="Liberation Sans">1</text></svg>
<div class="abs" style="left:1914px;top:0;width:1px;height:50px;background:#c0c0c0"></div>
</div>

<script>
(function(){
  var els=document.querySelectorAll('.t[data-w]');
  for(var i=0;i<els.length;i++){var e=els[i];var w=parseFloat(e.getAttribute('data-w'));var a=e.offsetWidth;if(a>0){e.style.transform='scaleX('+(w/a)+')';}}
})();
</script>

</body></html>
